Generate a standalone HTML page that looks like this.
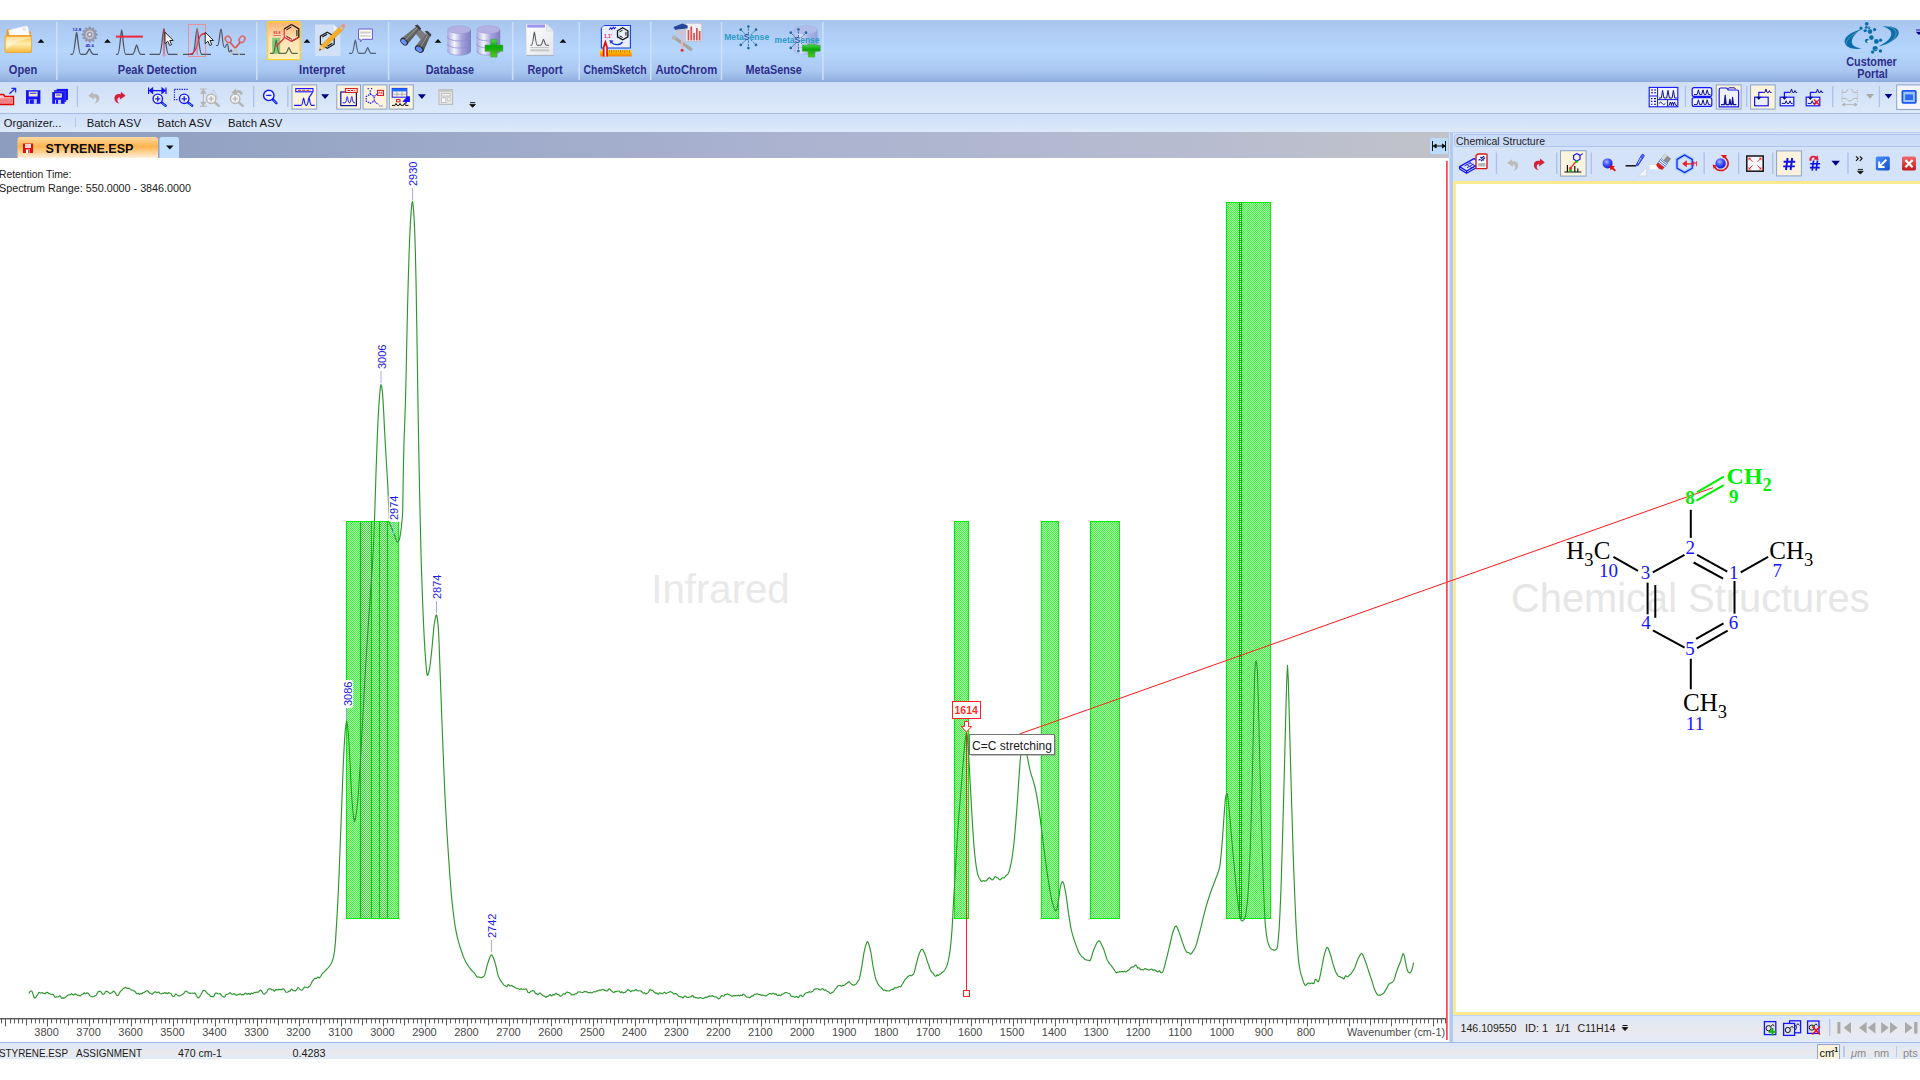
<!DOCTYPE html>
<html lang="en"><head><meta charset="utf-8"><title>STYRENE.ESP - Spectrum Processor</title>
<style>
html,body{margin:0;padding:0;background:#fff;width:1920px;height:1080px;overflow:hidden}
svg{display:block;position:absolute;left:0;top:0}
text{font-family:"Liberation Sans",sans-serif;font-size:11px;fill:#222}
.rb{font-weight:bold;font-size:12.5px;fill:#2d2d8c}
.ax{font-size:11px;fill:#4a4a4a}
.pk{font-size:11px;fill:#1a1ae6}
.ser{font-family:"Liberation Serif",serif}
</style></head><body>
<svg width="1920" height="1080" viewBox="0 0 1920 1080">
<defs>
<linearGradient id="gRib" x1="0" y1="0" x2="0" y2="1">
<stop offset="0" stop-color="#a9c5ee"/><stop offset="0.5" stop-color="#b6d6fe"/><stop offset="0.82" stop-color="#a9c7f0"/><stop offset="0.97" stop-color="#93b2e2"/><stop offset="1" stop-color="#8aa8da"/>
</linearGradient>
<linearGradient id="gTb" x1="0" y1="0" x2="0" y2="1">
<stop offset="0" stop-color="#cfdff8"/><stop offset="1" stop-color="#dce9f9"/>
</linearGradient>
<linearGradient id="gTab" x1="0" y1="0" x2="1" y2="0">
<stop offset="0" stop-color="#8c9dbf"/><stop offset="0.5" stop-color="#a8b1cf"/><stop offset="0.8" stop-color="#b6bbd0"/><stop offset="1" stop-color="#c1c2ca"/>
</linearGradient>
<linearGradient id="gTabSel" x1="0" y1="0" x2="0" y2="1">
<stop offset="0" stop-color="#ffd9a3"/><stop offset="0.45" stop-color="#ffb44e"/><stop offset="1" stop-color="#fff0dc"/>
</linearGradient>
<linearGradient id="gSt" x1="0" y1="0" x2="0" y2="1">
<stop offset="0" stop-color="#dce7f9"/><stop offset="0.55" stop-color="#e9e9ec"/><stop offset="1" stop-color="#e2ebf8"/>
</linearGradient>
<linearGradient id="gHi" x1="0" y1="0" x2="0" y2="1">
<stop offset="0" stop-color="#fbb06f"/><stop offset="0.45" stop-color="#ffe2b4"/><stop offset="1" stop-color="#fff1ba"/>
</linearGradient>
<pattern id="chk" width="2" height="2" patternUnits="userSpaceOnUse">
<rect width="2" height="2" fill="#c0ffc0"/><rect x="0" y="0" width="1" height="1" fill="#2cff2c"/><rect x="1" y="1" width="1" height="1" fill="#2cff2c"/>
</pattern>
<pattern id="chkD" width="2" height="2" patternUnits="userSpaceOnUse">
<rect width="2" height="2" fill="#c4f2c4"/><rect x="0" y="0" width="1" height="1" fill="#3cd23c"/><rect x="1" y="1" width="1" height="1" fill="#3cd23c"/>
</pattern>
</defs>

<rect x="0" y="0" width="1920" height="1080" fill="#fff"/>
<rect x="0" y="20" width="1920" height="62" fill="url(#gRib)"/>
<rect x="0" y="82" width="1920" height="31" fill="url(#gTb)"/>
<rect x="0" y="113" width="1920" height="1" fill="#a9b9e5"/>
<rect x="0" y="114" width="1920" height="18" fill="url(#gTb)"/>
<rect x="0" y="132" width="1449" height="26" fill="url(#gTab)"/>
<rect x="1449" y="132" width="471" height="910" fill="#d5e3f8"/>
<rect x="1449" y="132" width="471" height="1" fill="#b9cdf0"/>
<rect x="1450" y="133" width="3" height="909" fill="#b3c9f0"/>
<rect x="1449" y="133" width="1" height="909" fill="#cfdff7"/>
<rect x="1454.5" y="134.5" width="480" height="12" rx="2.5" fill="#cbdcf8" stroke="#aec5ee"/>
<text x="1456" y="145" style="font-size:11px;fill:#1c1c1c" textLength="89" lengthAdjust="spacingAndGlyphs">Chemical Structure</text>
<rect x="1453" y="181" width="470" height="834" fill="#ffe98f"/>
<rect x="1456" y="184" width="470" height="828" fill="#fff"/>
<rect x="1453" y="1015" width="467" height="27" fill="url(#gSt)"/>
<rect x="1453" y="1015" width="467" height="1" fill="#c3d3f2"/>
<rect x="0" y="1042" width="1920" height="1" fill="#a4b8e8"/>
<rect x="0" y="1043" width="1920" height="16" fill="url(#gSt)"/>
<text x="651.3" y="602.9" style="font-size:40.5px;fill:#e9e9e9" textLength="138.4" lengthAdjust="spacingAndGlyphs">Infrared</text>
<rect x="346" y="521" width="53" height="398" fill="url(#chk)"/>
<rect x="360" y="521" width="12" height="398" fill="url(#chkD)"/>
<rect x="379" y="521" width="9" height="398" fill="url(#chkD)"/>
<rect x="346" y="521" width="1" height="398" fill="#00f000"/>
<rect x="398" y="521" width="1" height="398" fill="#00f000"/>
<rect x="346" y="918" width="53" height="1" fill="#00f000"/>
<rect x="346" y="521" width="53" height="1" fill="#00f000"/>
<rect x="360" y="521" width="1" height="398" fill="#00c800"/>
<rect x="371" y="521" width="1" height="398" fill="#00c800"/>
<rect x="379" y="521" width="1" height="398" fill="#00c800"/>
<rect x="387" y="521" width="1" height="398" fill="#00c800"/>
<rect x="954" y="521" width="15" height="398" fill="url(#chk)"/>
<rect x="954" y="521" width="1" height="398" fill="#00f000"/>
<rect x="968" y="521" width="1" height="398" fill="#00f000"/>
<rect x="954" y="918" width="15" height="1" fill="#00f000"/>
<rect x="954" y="521" width="15" height="1" fill="#00f000"/>
<rect x="1041" y="521" width="18" height="398" fill="url(#chk)"/>
<rect x="1041" y="521" width="1" height="398" fill="#00f000"/>
<rect x="1058" y="521" width="1" height="398" fill="#00f000"/>
<rect x="1041" y="918" width="18" height="1" fill="#00f000"/>
<rect x="1041" y="521" width="18" height="1" fill="#00f000"/>
<rect x="1090" y="521" width="30" height="398" fill="url(#chk)"/>
<rect x="1090" y="521" width="1" height="398" fill="#00f000"/>
<rect x="1119" y="521" width="1" height="398" fill="#00f000"/>
<rect x="1090" y="918" width="30" height="1" fill="#00f000"/>
<rect x="1090" y="521" width="30" height="1" fill="#00f000"/>
<rect x="1226" y="202" width="45" height="717" fill="url(#chk)"/>
<rect x="1226" y="202" width="1" height="717" fill="#00f000"/>
<rect x="1270" y="202" width="1" height="717" fill="#00f000"/>
<rect x="1226" y="918" width="45" height="1" fill="#00f000"/>
<rect x="1226" y="202" width="45" height="1" fill="#00f000"/>
<rect x="1239" y="202" width="1" height="717" fill="#00b400"/>
<rect x="1241" y="202" width="1" height="717" fill="#00b400"/>
<rect x="1240" y="202" width="1" height="717" fill="#18c018"/>
<path d="M1240.5,203 V918" stroke="#f0fff0" stroke-width="1" stroke-dasharray="1 1"/>
<path d="M28.9,993.6 L29.6,992.0 L30.3,991.3 L31.0,991.0 L31.7,991.0 L32.4,992.3 L33.1,994.4 L33.8,996.5 L34.5,997.9 L35.2,997.9 L35.9,997.1 L36.6,996.2 L37.3,995.2 L38.0,994.0 L38.7,992.8 L39.4,992.4 L40.1,992.8 L40.8,993.1 L41.5,992.7 L42.2,992.6 L42.9,993.3 L43.6,993.3 L44.3,993.3 L45.0,993.9 L45.7,993.3 L46.4,992.5 L47.1,992.3 L47.8,992.6 L48.5,993.4 L49.2,993.6 L49.9,993.8 L50.6,994.2 L51.3,994.2 L52.0,994.4 L52.7,994.4 L53.4,994.7 L54.1,995.6 L54.8,996.9 L55.5,997.3 L56.2,996.9 L56.9,996.9 L57.6,997.0 L58.3,996.9 L59.0,996.4 L59.7,995.8 L60.4,996.1 L61.1,997.6 L61.8,998.5 L62.5,997.9 L63.2,997.7 L63.9,998.3 L64.6,998.0 L65.3,997.4 L66.0,997.0 L66.7,996.4 L67.4,995.5 L68.1,994.9 L68.8,994.9 L69.5,994.9 L70.2,994.8 L70.9,994.1 L71.6,993.5 L72.3,994.4 L73.0,995.2 L73.7,994.7 L74.4,994.1 L75.1,993.9 L75.8,994.2 L76.5,994.5 L77.2,994.9 L77.9,995.5 L78.6,995.4 L79.3,995.4 L80.0,996.0 L80.7,995.7 L81.4,994.8 L82.1,994.5 L82.8,994.3 L83.5,993.4 L84.2,992.8 L84.9,993.4 L85.6,993.8 L86.3,993.3 L87.0,992.8 L87.7,993.0 L88.4,993.5 L89.1,994.3 L89.8,995.5 L90.5,996.2 L91.2,996.5 L91.9,996.7 L92.6,996.9 L93.3,996.8 L94.0,996.5 L94.7,995.9 L95.4,995.7 L96.1,995.4 L96.8,994.3 L97.5,992.8 L98.2,991.8 L98.9,991.3 L99.6,991.3 L100.3,991.5 L101.0,991.9 L101.7,992.9 L102.4,993.9 L103.1,994.3 L103.8,994.2 L104.5,993.5 L105.2,992.2 L105.9,991.3 L106.6,991.2 L107.3,991.6 L108.0,992.0 L108.7,992.4 L109.4,993.2 L110.1,993.6 L110.8,993.1 L111.5,992.8 L112.2,992.6 L112.9,991.7 L113.6,991.1 L114.3,991.5 L115.0,992.4 L115.7,993.5 L116.4,994.8 L117.1,995.5 L117.8,995.5 L118.5,994.8 L119.2,993.6 L119.9,992.2 L120.6,991.2 L121.3,990.6 L122.0,990.1 L122.7,989.1 L123.4,988.4 L124.1,988.2 L124.8,987.6 L125.5,987.3 L126.2,987.8 L126.9,988.2 L127.6,988.4 L128.3,988.4 L129.0,988.3 L129.7,988.7 L130.4,989.4 L131.1,989.9 L131.8,990.2 L132.5,990.3 L133.2,990.5 L133.9,990.9 L134.6,991.1 L135.3,991.9 L136.0,993.0 L136.7,993.7 L137.4,993.7 L138.1,993.1 L138.8,993.7 L139.5,994.5 L140.2,994.1 L140.9,993.5 L141.6,993.8 L142.3,993.6 L143.0,992.6 L143.7,992.5 L144.4,992.4 L145.1,991.7 L145.8,991.3 L146.5,990.8 L147.2,990.7 L147.9,991.2 L148.6,992.0 L149.3,992.8 L150.0,993.3 L150.7,993.4 L151.4,993.9 L152.1,994.4 L152.8,993.8 L153.5,992.8 L154.2,992.3 L154.9,991.9 L155.6,991.8 L156.3,992.3 L157.0,992.7 L157.7,992.5 L158.4,991.9 L159.1,992.5 L159.8,993.5 L160.5,993.8 L161.2,994.0 L161.9,993.7 L162.6,993.4 L163.3,993.5 L164.0,992.8 L164.7,992.6 L165.4,993.3 L166.1,992.9 L166.8,993.2 L167.5,993.7 L168.2,993.0 L168.9,992.6 L169.6,993.1 L170.3,993.2 L171.0,993.5 L171.7,994.8 L172.4,995.8 L173.1,996.4 L173.8,996.5 L174.5,995.9 L175.2,994.6 L175.9,993.9 L176.6,994.4 L177.3,995.1 L178.0,995.6 L178.7,995.9 L179.4,995.9 L180.1,995.7 L180.8,995.5 L181.5,995.1 L182.2,994.6 L182.9,994.2 L183.6,993.6 L184.3,992.6 L185.0,991.6 L185.7,991.1 L186.4,991.2 L187.1,991.7 L187.8,992.1 L188.5,992.9 L189.2,993.4 L189.9,993.1 L190.6,993.0 L191.3,993.2 L192.0,993.2 L192.7,993.1 L193.4,993.3 L194.1,993.1 L194.8,992.8 L195.5,993.6 L196.2,995.2 L196.9,996.5 L197.6,997.5 L198.3,997.9 L199.0,997.5 L199.7,996.6 L200.4,995.4 L201.1,994.3 L201.8,993.0 L202.5,991.7 L203.2,990.7 L203.9,990.3 L204.6,990.5 L205.3,991.0 L206.0,991.8 L206.7,992.7 L207.4,993.6 L208.1,994.0 L208.8,994.3 L209.5,995.0 L210.2,996.0 L210.9,996.7 L211.6,996.5 L212.3,996.3 L213.0,996.8 L213.7,996.6 L214.4,995.0 L215.1,993.4 L215.8,993.0 L216.5,993.1 L217.2,993.3 L217.9,993.7 L218.6,994.0 L219.3,993.8 L220.0,993.5 L220.7,994.3 L221.4,995.3 L222.1,996.0 L222.8,996.5 L223.5,997.0 L224.2,997.2 L224.9,996.6 L225.6,995.2 L226.3,994.5 L227.0,994.5 L227.7,994.3 L228.4,993.8 L229.1,993.4 L229.8,992.8 L230.5,992.9 L231.2,993.8 L231.9,994.1 L232.6,994.1 L233.3,994.2 L234.0,993.7 L234.7,993.9 L235.4,994.9 L236.1,995.3 L236.8,995.1 L237.5,995.0 L238.2,994.6 L238.9,994.5 L239.6,994.1 L240.3,993.8 L241.0,994.4 L241.7,994.9 L242.4,994.5 L243.1,994.6 L243.8,994.6 L244.5,993.7 L245.2,993.1 L245.9,993.2 L246.6,993.7 L247.3,994.4 L248.0,994.1 L248.7,993.3 L249.4,993.9 L250.1,994.6 L250.8,993.7 L251.5,993.0 L252.2,993.4 L252.9,993.6 L253.6,993.2 L254.3,992.4 L255.0,992.3 L255.7,992.7 L256.4,992.3 L257.1,991.9 L257.8,992.3 L258.5,992.2 L259.2,991.0 L259.9,990.2 L260.6,990.1 L261.3,990.6 L262.0,991.6 L262.7,993.0 L263.4,993.9 L264.1,994.3 L264.8,993.9 L265.5,993.2 L266.2,992.7 L266.9,991.8 L267.6,990.3 L268.3,989.2 L269.0,988.9 L269.7,988.7 L270.4,988.8 L271.1,989.3 L271.8,989.8 L272.5,989.7 L273.2,989.8 L273.9,990.9 L274.6,991.2 L275.3,990.0 L276.0,989.3 L276.7,990.0 L277.4,990.0 L278.1,989.4 L278.8,989.6 L279.5,989.6 L280.2,989.4 L280.9,989.7 L281.6,989.6 L282.3,989.1 L283.0,988.9 L283.7,989.0 L284.4,989.7 L285.1,991.0 L285.8,992.1 L286.5,992.3 L287.2,992.2 L287.9,992.0 L288.6,991.4 L289.3,991.1 L290.0,991.1 L290.7,990.1 L291.4,989.1 L292.1,989.3 L292.8,990.3 L293.5,990.6 L294.2,990.7 L294.9,990.9 L295.6,990.6 L296.3,990.1 L297.0,989.0 L297.7,987.7 L298.4,987.7 L299.1,988.4 L299.8,989.1 L300.5,989.7 L301.2,990.1 L301.9,990.2 L302.6,989.8 L303.3,988.7 L304.0,987.6 L304.7,987.0 L305.4,987.3 L306.1,987.4 L306.8,987.5 L307.5,987.8 L308.2,987.4 L308.9,986.8 L309.6,986.4 L310.3,985.3 L311.0,984.0 L311.7,982.4 L312.4,981.2 L313.1,980.3 L313.8,979.4 L314.5,978.5 L315.2,978.2 L315.9,978.5 L316.6,978.5 L317.3,977.4 L318.0,977.0 L318.7,977.6 L319.4,977.9 L320.1,977.2 L320.8,976.3 L321.5,975.1 L322.2,973.8 L322.9,973.0 L323.6,972.4 L324.3,971.9 L325.0,971.1 L325.7,970.3 L326.4,969.7 L327.1,968.9 L327.8,968.2 L328.5,967.4 L329.2,966.5 L329.9,965.6 L330.6,964.5 L331.3,963.2 L332.0,961.7 L332.7,959.8 L333.4,957.2 L334.1,953.5 L334.8,948.8 L335.5,941.1 L336.2,929.9 L336.9,918.5 L337.6,906.1 L338.3,892.1 L339.0,876.0 L339.7,858.3 L340.4,840.0 L341.1,822.0 L341.8,803.4 L342.5,784.2 L343.2,766.4 L343.9,751.7 L344.6,739.0 L345.3,730.0 L346.0,724.2 L346.7,721.5 L347.4,724.7 L348.1,730.9 L348.8,740.0 L349.5,751.5 L350.2,766.0 L350.9,781.4 L351.6,794.1 L352.3,804.2 L353.0,812.0 L353.7,818.3 L354.4,821.5 L355.1,819.8 L355.8,816.1 L356.5,811.8 L357.2,806.0 L357.9,798.9 L358.6,790.0 L359.3,779.2 L360.0,767.2 L360.7,754.7 L361.4,742.4 L362.1,730.2 L362.8,717.5 L363.5,704.5 L364.2,691.6 L364.9,679.1 L365.6,667.3 L366.3,656.0 L367.0,645.0 L367.7,634.1 L368.4,623.5 L369.1,613.1 L369.8,603.1 L370.5,593.0 L371.2,582.8 L371.9,572.9 L372.6,562.4 L373.3,550.0 L374.0,533.8 L374.7,514.5 L375.4,491.9 L376.1,469.9 L376.8,450.0 L377.5,432.1 L378.2,417.5 L378.9,405.0 L379.6,395.2 L380.3,387.9 L381.0,384.7 L381.7,386.6 L382.4,391.6 L383.1,401.4 L383.8,414.4 L384.5,428.9 L385.2,442.1 L385.9,453.8 L386.6,465.0 L387.3,476.7 L388.0,489.8 L388.7,508.4 L389.4,521.3 L390.1,524.3 L390.8,526.1 L391.5,527.5 L392.2,529.3 L392.9,531.2 L393.6,532.9 L394.3,534.7 L395.0,536.4 L395.7,538.6 L396.4,540.7 L397.1,542.0 L397.8,542.1 L398.5,541.2 L399.2,539.8 L399.9,537.2 L400.6,532.9 L401.3,527.8 L402.0,521.0 L402.7,512.4 L403.4,467.2 L404.1,438.8 L404.8,420.6 L405.5,400.6 L406.2,370.5 L406.9,336.1 L407.6,305.6 L408.3,279.3 L409.0,256.0 L409.7,237.6 L410.4,222.4 L411.1,212.1 L411.8,204.2 L412.5,201.4 L413.2,206.0 L413.9,214.6 L414.6,228.3 L415.3,249.3 L416.0,279.3 L416.7,321.5 L417.4,364.9 L418.1,410.7 L418.8,451.3 L419.5,487.3 L420.2,519.8 L420.9,549.1 L421.6,573.2 L422.3,593.6 L423.0,611.1 L423.7,627.2 L424.4,641.4 L425.1,652.4 L425.8,662.3 L426.5,670.7 L427.2,675.3 L427.9,675.1 L428.6,672.9 L429.3,670.0 L430.0,665.8 L430.7,660.0 L431.4,653.9 L432.1,646.7 L432.8,638.6 L433.5,630.9 L434.2,624.7 L434.9,620.4 L435.6,616.6 L436.3,614.7 L437.0,616.3 L437.7,621.4 L438.4,628.6 L439.1,643.3 L439.8,663.5 L440.5,682.4 L441.2,701.4 L441.9,720.4 L442.6,738.5 L443.3,756.1 L444.0,773.3 L444.7,789.5 L445.4,804.0 L446.1,817.0 L446.8,829.2 L447.5,840.6 L448.2,851.3 L448.9,861.6 L449.6,871.6 L450.3,881.2 L451.0,890.1 L451.7,898.0 L452.4,904.8 L453.1,911.1 L453.8,916.8 L454.5,922.0 L455.2,926.6 L455.9,930.4 L456.6,933.9 L457.3,937.0 L458.0,939.8 L458.7,942.4 L459.4,944.8 L460.1,947.0 L460.8,949.2 L461.5,951.3 L462.2,953.3 L462.9,955.3 L463.6,957.1 L464.3,958.8 L465.0,960.3 L465.7,961.8 L466.4,963.0 L467.1,964.2 L467.8,965.2 L468.5,966.3 L469.2,967.3 L469.9,968.2 L470.6,969.1 L471.3,970.0 L472.0,970.8 L472.7,971.5 L473.4,972.1 L474.1,972.9 L474.8,973.7 L475.5,974.8 L476.2,976.0 L476.9,976.8 L477.6,977.1 L478.3,977.0 L479.0,976.9 L479.7,977.3 L480.4,977.7 L481.1,977.7 L481.8,977.4 L482.5,977.1 L483.2,976.7 L483.9,976.3 L484.6,975.2 L485.3,973.1 L486.0,970.3 L486.7,967.2 L487.4,964.4 L488.1,962.2 L488.8,960.2 L489.5,958.2 L490.2,956.5 L490.9,955.3 L491.6,954.9 L492.3,955.5 L493.0,956.9 L493.7,958.7 L494.4,960.8 L495.1,962.8 L495.8,965.4 L496.5,968.5 L497.2,971.8 L497.9,974.7 L498.6,976.7 L499.3,978.1 L500.0,979.4 L500.7,980.6 L501.4,981.7 L502.1,982.7 L502.8,983.6 L503.5,984.6 L504.2,985.3 L504.9,985.5 L505.6,985.9 L506.3,986.6 L507.0,986.6 L507.7,985.3 L508.4,984.5 L509.1,985.1 L509.8,986.0 L510.5,986.0 L511.2,985.5 L511.9,985.5 L512.6,986.2 L513.3,986.7 L514.0,986.9 L514.7,987.2 L515.4,987.7 L516.1,988.1 L516.8,988.2 L517.5,988.7 L518.2,988.8 L518.9,988.9 L519.6,989.4 L520.3,989.2 L521.0,988.6 L521.7,989.0 L522.4,989.2 L523.1,989.1 L523.8,989.3 L524.5,989.3 L525.2,989.1 L525.9,988.8 L526.6,989.4 L527.3,991.1 L528.0,992.4 L528.7,992.8 L529.4,992.9 L530.1,992.2 L530.8,991.2 L531.5,991.1 L532.2,991.0 L532.9,990.6 L533.6,990.7 L534.3,991.4 L535.0,992.7 L535.7,993.6 L536.4,993.5 L537.1,993.9 L537.8,994.6 L538.5,994.2 L539.2,993.4 L539.9,993.0 L540.6,993.3 L541.3,994.2 L542.0,994.8 L542.7,995.6 L543.4,996.0 L544.1,995.9 L544.8,996.3 L545.5,997.1 L546.2,997.3 L546.9,996.8 L547.6,996.3 L548.3,996.3 L549.0,995.4 L549.7,994.5 L550.4,994.8 L551.1,995.7 L551.8,995.9 L552.5,994.8 L553.2,994.4 L553.9,995.1 L554.6,994.8 L555.3,993.8 L556.0,993.3 L556.7,993.7 L557.4,994.4 L558.1,994.5 L558.8,994.6 L559.5,995.6 L560.2,996.3 L560.9,996.1 L561.6,995.6 L562.3,995.0 L563.0,994.1 L563.7,993.6 L564.4,993.9 L565.1,994.1 L565.8,993.2 L566.5,992.2 L567.2,992.0 L567.9,992.4 L568.6,992.5 L569.3,992.8 L570.0,993.1 L570.7,993.6 L571.4,994.6 L572.1,994.9 L572.8,994.7 L573.5,994.8 L574.2,994.8 L574.9,994.1 L575.6,993.7 L576.3,993.8 L577.0,993.2 L577.7,992.2 L578.4,991.9 L579.1,992.0 L579.8,991.9 L580.5,992.0 L581.2,992.3 L581.9,992.5 L582.6,992.5 L583.3,992.2 L584.0,991.7 L584.7,991.4 L585.4,991.6 L586.1,991.9 L586.8,991.8 L587.5,992.1 L588.2,992.7 L588.9,992.9 L589.6,992.5 L590.3,992.3 L591.0,992.8 L591.7,993.0 L592.4,992.6 L593.1,992.1 L593.8,991.7 L594.5,991.8 L595.2,991.8 L595.9,991.5 L596.6,991.1 L597.3,990.9 L598.0,990.9 L598.7,990.4 L599.4,990.0 L600.1,990.1 L600.8,990.2 L601.5,989.9 L602.2,989.5 L602.9,989.4 L603.6,989.8 L604.3,990.3 L605.0,990.3 L605.7,990.6 L606.4,991.0 L607.1,991.0 L607.8,990.3 L608.5,989.3 L609.2,988.8 L609.9,989.2 L610.6,990.0 L611.3,990.7 L612.0,991.3 L612.7,991.9 L613.4,992.5 L614.1,992.6 L614.8,991.7 L615.5,991.4 L616.2,991.6 L616.9,991.3 L617.6,991.0 L618.3,991.0 L619.0,991.0 L619.7,991.5 L620.4,992.6 L621.1,992.5 L621.8,991.7 L622.5,992.4 L623.2,993.0 L623.9,992.4 L624.6,992.5 L625.3,992.4 L626.0,991.5 L626.7,990.9 L627.4,990.1 L628.1,989.5 L628.8,990.0 L629.5,990.5 L630.2,991.2 L630.9,991.7 L631.6,991.1 L632.3,990.5 L633.0,990.7 L633.7,991.0 L634.4,990.8 L635.1,990.0 L635.8,989.5 L636.5,989.8 L637.2,990.8 L637.9,991.0 L638.6,990.7 L639.3,990.7 L640.0,990.7 L640.7,990.9 L641.4,991.3 L642.1,992.1 L642.8,993.0 L643.5,993.1 L644.2,992.8 L644.9,993.3 L645.6,993.9 L646.3,993.8 L647.0,993.3 L647.7,993.0 L648.4,992.3 L649.1,990.9 L649.8,989.9 L650.5,989.7 L651.2,990.1 L651.9,990.4 L652.6,990.4 L653.3,991.1 L654.0,992.0 L654.7,992.5 L655.4,993.0 L656.1,993.5 L656.8,993.0 L657.5,993.3 L658.2,994.3 L658.9,993.7 L659.6,992.9 L660.3,992.9 L661.0,993.2 L661.7,993.7 L662.4,993.7 L663.1,993.3 L663.8,992.6 L664.5,992.1 L665.2,992.8 L665.9,993.6 L666.6,993.3 L667.3,992.8 L668.0,992.6 L668.7,992.3 L669.4,991.9 L670.1,991.6 L670.8,991.8 L671.5,992.2 L672.2,992.4 L672.9,993.2 L673.6,994.0 L674.3,994.0 L675.0,993.5 L675.7,993.6 L676.4,993.9 L677.1,994.5 L677.8,995.3 L678.5,996.0 L679.2,996.4 L679.9,996.7 L680.6,996.9 L681.3,996.8 L682.0,997.0 L682.7,997.8 L683.4,997.6 L684.1,996.5 L684.8,996.1 L685.5,996.3 L686.2,996.8 L686.9,997.4 L687.6,997.5 L688.3,997.3 L689.0,997.3 L689.7,997.1 L690.4,996.9 L691.1,996.5 L691.8,995.8 L692.5,995.3 L693.2,996.2 L693.9,997.3 L694.6,997.1 L695.3,997.3 L696.0,997.9 L696.7,997.8 L697.4,997.7 L698.1,998.3 L698.8,998.4 L699.5,997.9 L700.2,997.6 L700.9,997.7 L701.6,998.0 L702.3,998.2 L703.0,998.4 L703.7,998.2 L704.4,997.9 L705.1,997.5 L705.8,997.1 L706.5,997.4 L707.2,997.4 L707.9,996.7 L708.6,996.3 L709.3,996.1 L710.0,995.9 L710.7,996.2 L711.4,996.1 L712.1,995.6 L712.8,995.9 L713.5,996.5 L714.2,996.8 L714.9,996.9 L715.6,996.8 L716.3,997.0 L717.0,997.5 L717.7,998.2 L718.4,998.9 L719.1,998.7 L719.8,998.3 L720.5,997.3 L721.2,996.0 L721.9,995.6 L722.6,995.8 L723.3,996.2 L724.0,996.0 L724.7,994.9 L725.4,994.6 L726.1,994.6 L726.8,994.2 L727.5,993.9 L728.2,994.3 L728.9,994.7 L729.6,994.9 L730.3,995.3 L731.0,995.7 L731.7,996.2 L732.4,996.4 L733.1,995.7 L733.8,995.6 L734.5,995.9 L735.2,995.6 L735.9,995.5 L736.6,995.8 L737.3,995.7 L738.0,995.2 L738.7,995.3 L739.4,996.0 L740.1,995.7 L740.8,995.0 L741.5,995.5 L742.2,995.5 L742.9,994.3 L743.6,994.1 L744.3,994.8 L745.0,995.3 L745.7,996.1 L746.4,996.9 L747.1,997.0 L747.8,997.1 L748.5,997.3 L749.2,997.5 L749.9,997.7 L750.6,997.2 L751.3,996.2 L752.0,995.9 L752.7,996.2 L753.4,995.7 L754.1,994.7 L754.8,994.2 L755.5,994.3 L756.2,994.2 L756.9,993.9 L757.6,993.9 L758.3,994.4 L759.0,994.7 L759.7,994.5 L760.4,994.8 L761.1,995.3 L761.8,995.1 L762.5,995.0 L763.2,995.2 L763.9,995.4 L764.6,995.7 L765.3,995.7 L766.0,995.9 L766.7,995.7 L767.4,994.8 L768.1,994.5 L768.8,994.1 L769.5,993.6 L770.2,993.6 L770.9,993.8 L771.6,994.1 L772.3,993.9 L773.0,993.2 L773.7,993.2 L774.4,994.1 L775.1,994.0 L775.8,993.7 L776.5,994.5 L777.2,995.4 L777.9,995.6 L778.6,995.2 L779.3,994.9 L780.0,995.4 L780.7,995.7 L781.4,994.8 L782.1,994.0 L782.8,994.1 L783.5,993.7 L784.2,993.2 L784.9,992.9 L785.6,992.5 L786.3,992.5 L787.0,992.8 L787.7,993.0 L788.4,993.3 L789.1,993.5 L789.8,993.8 L790.5,995.0 L791.2,996.2 L791.9,996.4 L792.6,996.3 L793.3,996.5 L794.0,996.9 L794.7,997.3 L795.4,997.2 L796.1,996.4 L796.8,996.5 L797.5,997.3 L798.2,997.8 L798.9,996.9 L799.6,995.7 L800.3,995.1 L801.0,995.2 L801.7,996.2 L802.4,996.6 L803.1,996.0 L803.8,995.3 L804.5,994.3 L805.2,993.3 L805.9,993.0 L806.6,992.8 L807.3,992.6 L808.0,992.5 L808.7,992.0 L809.4,991.7 L810.1,992.1 L810.8,992.2 L811.5,991.8 L812.2,991.7 L812.9,991.1 L813.6,990.0 L814.3,989.5 L815.0,989.1 L815.7,988.8 L816.4,988.9 L817.1,988.7 L817.8,988.8 L818.5,989.2 L819.2,989.4 L819.9,989.8 L820.6,990.0 L821.3,989.4 L822.0,988.8 L822.7,988.7 L823.4,989.3 L824.1,990.2 L824.8,990.1 L825.5,989.8 L826.2,990.3 L826.9,991.1 L827.6,991.6 L828.3,991.8 L829.0,992.1 L829.7,993.0 L830.4,993.4 L831.1,993.1 L831.8,992.7 L832.5,992.4 L833.2,992.0 L833.9,991.1 L834.6,990.0 L835.3,989.0 L836.0,988.4 L836.7,987.6 L837.4,986.4 L838.1,985.7 L838.8,985.6 L839.5,985.5 L840.2,985.5 L840.9,986.1 L841.6,986.2 L842.3,985.7 L843.0,985.4 L843.7,985.4 L844.4,985.2 L845.1,984.6 L845.8,984.0 L846.5,983.4 L847.2,983.0 L847.9,982.6 L848.6,981.7 L849.3,981.8 L850.0,982.7 L850.7,983.4 L851.4,984.0 L852.1,984.6 L852.8,984.9 L853.5,985.3 L854.2,985.1 L854.9,984.4 L855.6,984.3 L856.3,983.9 L857.0,982.5 L857.7,981.6 L858.4,980.7 L859.1,979.5 L859.8,977.1 L860.5,973.7 L861.2,969.7 L861.9,965.9 L862.6,961.6 L863.3,956.9 L864.0,952.6 L864.7,949.4 L865.4,946.7 L866.1,944.2 L866.8,942.4 L867.5,941.7 L868.2,942.5 L868.9,944.4 L869.6,947.0 L870.3,949.8 L871.0,953.2 L871.7,957.6 L872.4,962.3 L873.1,966.5 L873.8,970.1 L874.5,973.7 L875.2,976.9 L875.9,979.4 L876.6,981.1 L877.3,982.6 L878.0,983.9 L878.7,985.1 L879.4,986.0 L880.1,986.6 L880.8,987.1 L881.5,987.7 L882.2,988.7 L882.9,989.7 L883.6,990.3 L884.3,990.1 L885.0,990.1 L885.7,990.6 L886.4,990.9 L887.1,990.9 L887.8,991.0 L888.5,991.0 L889.2,990.9 L889.9,990.5 L890.6,990.0 L891.3,989.8 L892.0,989.4 L892.7,989.3 L893.4,989.4 L894.1,988.4 L894.8,987.6 L895.5,987.9 L896.2,988.1 L896.9,987.7 L897.6,987.3 L898.3,987.0 L899.0,986.6 L899.7,986.6 L900.4,986.8 L901.1,986.2 L901.8,985.0 L902.5,984.0 L903.2,982.9 L903.9,981.5 L904.6,980.2 L905.3,979.3 L906.0,978.6 L906.7,977.8 L907.4,976.8 L908.1,976.5 L908.8,976.0 L909.5,975.4 L910.2,975.4 L910.9,975.8 L911.6,975.7 L912.3,975.0 L913.0,974.5 L913.7,973.8 L914.4,971.9 L915.1,969.1 L915.8,966.0 L916.5,963.4 L917.2,960.7 L917.9,957.9 L918.6,955.5 L919.3,953.6 L920.0,952.0 L920.7,950.5 L921.4,949.5 L922.1,949.2 L922.8,949.8 L923.5,951.0 L924.2,952.5 L924.9,954.1 L925.6,955.9 L926.3,958.1 L927.0,960.3 L927.7,962.4 L928.4,964.3 L929.1,966.3 L929.8,968.2 L930.5,969.9 L931.2,971.4 L931.9,972.3 L932.6,972.9 L933.3,973.6 L934.0,974.7 L934.7,975.6 L935.4,976.2 L936.1,976.2 L936.8,975.1 L937.5,974.9 L938.2,975.6 L938.9,974.9 L939.6,974.1 L940.3,974.1 L941.0,973.6 L941.7,972.8 L942.4,972.3 L943.1,971.8 L943.8,971.2 L944.5,970.3 L945.2,969.2 L945.9,968.0 L946.6,966.6 L947.3,964.6 L948.0,961.9 L948.7,958.7 L949.4,954.9 L950.1,950.1 L950.8,944.0 L951.5,936.6 L952.2,926.7 L952.9,913.9 L953.6,901.0 L954.3,888.8 L955.0,876.7 L955.7,864.8 L956.4,853.0 L957.1,841.5 L957.8,830.7 L958.5,820.9 L959.2,811.8 L959.9,803.1 L960.6,794.4 L961.3,785.6 L962.0,776.8 L962.7,768.1 L963.4,759.7 L964.1,751.4 L964.8,743.3 L965.5,737.6 L966.2,733.6 L966.9,734.1 L967.6,739.0 L968.3,748.6 L969.0,760.8 L969.7,773.8 L970.4,787.3 L971.1,800.1 L971.8,812.8 L972.5,824.6 L973.2,835.0 L973.9,844.7 L974.6,853.2 L975.3,859.5 L976.0,864.9 L976.7,869.5 L977.4,873.1 L978.1,875.3 L978.8,877.0 L979.5,878.5 L980.2,879.6 L980.9,880.6 L981.6,881.4 L982.3,881.3 L983.0,880.6 L983.7,880.8 L984.4,881.2 L985.1,880.9 L985.8,880.8 L986.5,880.7 L987.2,879.7 L987.9,878.8 L988.6,878.2 L989.3,877.7 L990.0,878.0 L990.7,878.8 L991.4,879.4 L992.1,880.0 L992.8,879.8 L993.5,878.8 L994.2,877.8 L994.9,876.8 L995.6,876.6 L996.3,877.1 L997.0,877.8 L997.7,877.9 L998.4,878.2 L999.1,879.4 L999.8,879.9 L1000.5,879.7 L1001.2,879.0 L1001.9,878.2 L1002.6,877.8 L1003.3,877.8 L1004.0,877.8 L1004.7,877.1 L1005.4,876.3 L1006.1,875.5 L1006.8,875.0 L1007.5,874.5 L1008.2,873.5 L1008.9,872.0 L1009.6,869.7 L1010.3,866.8 L1011.0,863.7 L1011.7,860.0 L1012.4,855.5 L1013.1,850.3 L1013.8,844.5 L1014.5,837.8 L1015.2,829.8 L1015.9,820.9 L1016.6,811.7 L1017.3,802.2 L1018.0,792.0 L1018.7,781.8 L1019.4,771.4 L1020.1,761.5 L1020.8,755.1 L1021.5,750.8 L1022.2,748.6 L1022.9,747.4 L1023.6,747.0 L1024.3,747.7 L1025.0,749.0 L1025.7,750.7 L1026.4,753.1 L1027.1,755.8 L1027.8,759.2 L1028.5,762.9 L1029.2,766.6 L1029.9,769.7 L1030.6,772.4 L1031.3,774.8 L1032.0,777.0 L1032.7,779.2 L1033.4,781.4 L1034.1,783.8 L1034.8,786.5 L1035.5,789.5 L1036.2,792.9 L1036.9,796.7 L1037.6,800.9 L1038.3,805.4 L1039.0,810.0 L1039.7,814.8 L1040.4,819.9 L1041.1,825.4 L1041.8,831.2 L1042.5,837.2 L1043.2,843.0 L1043.9,848.5 L1044.6,853.9 L1045.3,859.2 L1046.0,864.4 L1046.7,869.5 L1047.4,874.4 L1048.1,879.0 L1048.8,883.4 L1049.5,887.7 L1050.2,892.0 L1050.9,896.0 L1051.6,899.5 L1052.3,902.5 L1053.0,904.7 L1053.7,906.8 L1054.4,908.7 L1055.1,910.1 L1055.8,910.9 L1056.5,910.5 L1057.2,907.8 L1057.9,903.8 L1058.6,899.8 L1059.3,894.4 L1060.0,888.8 L1060.7,885.2 L1061.4,883.4 L1062.1,882.1 L1062.8,881.7 L1063.5,882.9 L1064.2,885.5 L1064.9,888.9 L1065.6,892.4 L1066.3,896.6 L1067.0,901.9 L1067.7,907.4 L1068.4,912.5 L1069.1,917.1 L1069.8,921.6 L1070.5,925.7 L1071.2,929.3 L1071.9,932.2 L1072.6,934.8 L1073.3,937.2 L1074.0,939.4 L1074.7,941.5 L1075.4,943.4 L1076.1,945.4 L1076.8,947.3 L1077.5,949.1 L1078.2,950.8 L1078.9,952.4 L1079.6,953.6 L1080.3,954.5 L1081.0,955.5 L1081.7,956.5 L1082.4,957.0 L1083.1,957.4 L1083.8,958.2 L1084.5,959.1 L1085.2,959.5 L1085.9,959.7 L1086.6,959.9 L1087.3,960.2 L1088.0,960.2 L1088.7,960.3 L1089.4,960.9 L1090.1,960.6 L1090.8,959.3 L1091.5,957.1 L1092.2,954.7 L1092.9,952.2 L1093.6,950.2 L1094.3,948.6 L1095.0,946.9 L1095.7,945.3 L1096.4,943.7 L1097.1,942.4 L1097.8,941.5 L1098.5,940.9 L1099.2,940.8 L1099.9,941.4 L1100.6,942.5 L1101.3,943.9 L1102.0,945.4 L1102.7,947.0 L1103.4,948.5 L1104.1,950.4 L1104.8,952.6 L1105.5,954.9 L1106.2,957.2 L1106.9,959.2 L1107.6,960.7 L1108.3,961.8 L1109.0,962.9 L1109.7,963.9 L1110.4,964.7 L1111.1,965.4 L1111.8,966.3 L1112.5,967.3 L1113.2,968.4 L1113.9,969.4 L1114.6,970.5 L1115.3,971.5 L1116.0,972.6 L1116.7,972.8 L1117.4,972.2 L1118.1,972.3 L1118.8,972.0 L1119.5,971.4 L1120.2,971.8 L1120.9,972.0 L1121.6,971.5 L1122.3,971.4 L1123.0,971.9 L1123.7,971.6 L1124.4,971.3 L1125.1,971.8 L1125.8,971.8 L1126.5,971.6 L1127.2,971.0 L1127.9,970.4 L1128.6,970.4 L1129.3,969.7 L1130.0,968.7 L1130.7,967.9 L1131.4,967.2 L1132.1,967.1 L1132.8,967.1 L1133.5,966.8 L1134.2,966.2 L1134.9,965.4 L1135.6,965.0 L1136.3,965.5 L1137.0,966.8 L1137.7,968.1 L1138.4,967.9 L1139.1,967.8 L1139.8,968.7 L1140.5,969.6 L1141.2,969.8 L1141.9,969.5 L1142.6,969.8 L1143.3,970.0 L1144.0,969.5 L1144.7,968.6 L1145.4,968.6 L1146.1,969.1 L1146.8,969.0 L1147.5,969.4 L1148.2,969.9 L1148.9,969.8 L1149.6,969.8 L1150.3,969.7 L1151.0,969.4 L1151.7,969.0 L1152.4,969.5 L1153.1,970.3 L1153.8,970.0 L1154.5,969.8 L1155.2,970.1 L1155.9,970.5 L1156.6,971.3 L1157.3,971.8 L1158.0,972.0 L1158.7,971.2 L1159.4,970.7 L1160.1,971.6 L1160.8,972.8 L1161.5,972.9 L1162.2,972.4 L1162.9,971.6 L1163.6,969.7 L1164.3,967.1 L1165.0,964.3 L1165.7,961.7 L1166.4,959.1 L1167.1,956.3 L1167.8,953.3 L1168.5,950.4 L1169.2,947.4 L1169.9,944.5 L1170.6,941.5 L1171.3,938.3 L1172.0,935.3 L1172.7,932.7 L1173.4,930.7 L1174.1,928.8 L1174.8,927.2 L1175.5,926.2 L1176.2,926.1 L1176.9,926.9 L1177.6,928.4 L1178.3,930.3 L1179.0,932.1 L1179.7,933.9 L1180.4,935.9 L1181.1,938.1 L1181.8,940.3 L1182.5,942.4 L1183.2,944.2 L1183.9,946.2 L1184.6,948.1 L1185.3,949.8 L1186.0,951.2 L1186.7,952.1 L1187.4,952.5 L1188.1,952.5 L1188.8,952.5 L1189.5,953.4 L1190.2,954.2 L1190.9,954.1 L1191.6,953.4 L1192.3,952.4 L1193.0,951.3 L1193.7,950.3 L1194.4,949.0 L1195.1,947.7 L1195.8,946.0 L1196.5,943.9 L1197.2,941.5 L1197.9,938.9 L1198.6,936.2 L1199.3,933.5 L1200.0,930.8 L1200.7,928.1 L1201.4,925.3 L1202.1,922.4 L1202.8,919.4 L1203.5,916.5 L1204.2,913.6 L1204.9,911.0 L1205.6,908.4 L1206.3,906.0 L1207.0,903.6 L1207.7,901.3 L1208.4,899.0 L1209.1,896.8 L1209.8,894.7 L1210.5,892.6 L1211.2,890.7 L1211.9,888.8 L1212.6,887.0 L1213.3,885.2 L1214.0,883.3 L1214.7,881.5 L1215.4,879.5 L1216.1,877.7 L1216.8,876.0 L1217.5,874.2 L1218.2,872.3 L1218.9,870.0 L1219.6,867.1 L1220.3,862.8 L1221.0,856.2 L1221.7,848.1 L1222.4,839.6 L1223.1,829.6 L1223.8,819.4 L1224.5,809.7 L1225.2,800.7 L1225.9,796.1 L1226.6,793.6 L1227.3,793.7 L1228.0,798.3 L1228.7,805.1 L1229.4,811.8 L1230.1,819.7 L1230.8,828.2 L1231.5,836.4 L1232.2,844.3 L1232.9,852.0 L1233.6,859.7 L1234.3,867.2 L1235.0,874.6 L1235.7,881.9 L1236.4,888.9 L1237.1,895.3 L1237.8,901.6 L1238.5,907.3 L1239.2,911.9 L1239.9,915.4 L1240.6,918.5 L1241.3,920.5 L1242.0,920.9 L1242.7,920.6 L1243.4,920.2 L1244.1,919.5 L1244.8,918.4 L1245.5,915.6 L1246.2,911.4 L1246.9,906.4 L1247.6,899.3 L1248.3,889.6 L1249.0,878.0 L1249.7,863.0 L1250.4,844.4 L1251.1,822.7 L1251.8,796.8 L1252.5,768.8 L1253.2,737.5 L1253.9,706.4 L1254.6,676.7 L1255.3,663.4 L1256.0,660.9 L1256.7,663.4 L1257.4,670.2 L1258.1,693.5 L1258.8,719.5 L1259.5,748.3 L1260.2,777.0 L1260.9,803.4 L1261.6,828.6 L1262.3,851.9 L1263.0,873.9 L1263.7,892.5 L1264.4,909.0 L1265.1,921.9 L1265.8,929.4 L1266.5,935.1 L1267.2,939.3 L1267.9,942.2 L1268.6,944.5 L1269.3,946.3 L1270.0,947.6 L1270.7,948.5 L1271.4,949.0 L1272.1,949.4 L1272.8,949.8 L1273.5,949.9 L1274.2,950.4 L1274.9,950.2 L1275.6,949.7 L1276.3,949.1 L1277.0,948.3 L1277.7,944.8 L1278.4,938.0 L1279.1,929.3 L1279.8,916.5 L1280.5,900.8 L1281.2,882.5 L1281.9,859.6 L1282.6,835.3 L1283.3,810.5 L1284.0,784.6 L1284.7,757.4 L1285.4,729.5 L1286.1,701.3 L1286.8,679.2 L1287.5,665.3 L1288.2,677.7 L1288.9,701.3 L1289.6,727.6 L1290.3,753.8 L1291.0,779.6 L1291.7,804.4 L1292.4,828.0 L1293.1,850.4 L1293.8,870.7 L1294.5,889.3 L1295.2,906.1 L1295.9,921.5 L1296.6,934.9 L1297.3,945.2 L1298.0,954.3 L1298.7,961.7 L1299.4,966.7 L1300.1,970.4 L1300.8,973.4 L1301.5,975.8 L1302.2,978.0 L1302.9,980.2 L1303.6,982.4 L1304.3,984.1 L1305.0,985.2 L1305.7,985.3 L1306.4,984.8 L1307.1,983.8 L1307.8,983.1 L1308.5,983.1 L1309.2,983.3 L1309.9,983.7 L1310.6,983.5 L1311.3,983.0 L1312.0,983.1 L1312.7,983.4 L1313.4,983.7 L1314.1,983.0 L1314.8,980.8 L1315.5,979.3 L1316.2,979.5 L1316.9,980.5 L1317.6,981.6 L1318.3,981.8 L1319.0,980.4 L1319.7,977.7 L1320.4,974.3 L1321.1,970.8 L1321.8,967.5 L1322.5,963.7 L1323.2,959.8 L1323.9,956.4 L1324.6,953.8 L1325.3,951.4 L1326.0,949.2 L1326.7,947.8 L1327.4,947.3 L1328.1,948.1 L1328.8,949.7 L1329.5,951.8 L1330.2,953.8 L1330.9,956.0 L1331.6,958.6 L1332.3,961.3 L1333.0,963.9 L1333.7,966.1 L1334.4,968.2 L1335.1,970.2 L1335.8,972.0 L1336.5,973.4 L1337.2,974.4 L1337.9,975.5 L1338.6,976.5 L1339.3,976.6 L1340.0,976.6 L1340.7,977.1 L1341.4,977.8 L1342.1,977.9 L1342.8,977.9 L1343.5,978.9 L1344.2,978.7 L1344.9,976.8 L1345.6,975.7 L1346.3,976.1 L1347.0,976.7 L1347.7,976.8 L1348.4,976.3 L1349.1,975.3 L1349.8,974.6 L1350.5,974.3 L1351.2,973.7 L1351.9,972.5 L1352.6,971.4 L1353.3,970.3 L1354.0,969.1 L1354.7,967.7 L1355.4,965.9 L1356.1,964.0 L1356.8,962.0 L1357.5,960.1 L1358.2,958.6 L1358.9,957.2 L1359.6,955.8 L1360.3,954.6 L1361.0,953.8 L1361.7,953.5 L1362.4,954.1 L1363.1,955.4 L1363.8,957.2 L1364.5,959.0 L1365.2,960.8 L1365.9,962.7 L1366.6,964.7 L1367.3,966.9 L1368.0,969.1 L1368.7,971.2 L1369.4,973.3 L1370.1,975.4 L1370.8,977.6 L1371.5,979.7 L1372.2,981.8 L1372.9,984.2 L1373.6,986.6 L1374.3,988.8 L1375.0,990.6 L1375.7,991.9 L1376.4,993.1 L1377.1,994.2 L1377.8,995.0 L1378.5,995.3 L1379.2,995.1 L1379.9,995.0 L1380.6,995.1 L1381.3,994.7 L1382.0,994.3 L1382.7,993.8 L1383.4,993.3 L1384.1,992.6 L1384.8,991.4 L1385.5,990.1 L1386.2,989.1 L1386.9,987.9 L1387.6,986.5 L1388.3,985.1 L1389.0,984.2 L1389.7,983.5 L1390.4,983.1 L1391.1,983.0 L1391.8,982.6 L1392.5,982.0 L1393.2,981.3 L1393.9,980.2 L1394.6,978.4 L1395.3,976.0 L1396.0,973.5 L1396.7,971.2 L1397.4,969.3 L1398.1,967.5 L1398.8,965.8 L1399.5,964.0 L1400.2,962.3 L1400.9,960.1 L1401.6,957.6 L1402.3,955.3 L1403.0,953.8 L1403.7,953.8 L1404.4,956.4 L1405.1,960.1 L1405.8,963.4 L1406.5,966.9 L1407.2,969.8 L1407.9,971.3 L1408.6,972.3 L1409.3,972.9 L1410.0,972.9 L1410.7,972.1 L1411.4,971.0 L1412.1,969.3 L1412.8,966.4 L1413.5,962.6" fill="none" stroke="#2e962e" stroke-width="1.15" stroke-linejoin="round"/>
<rect x="412.0" y="188" width="1" height="12" fill="#aaaaf8"/>
<rect x="407.5" y="160" width="11" height="28" rx="2" fill="#fff"/>
<text class="pk" transform="translate(417.0,186) rotate(-90)">2930</text>
<rect x="380.5" y="371" width="1" height="12" fill="#aaaaf8"/>
<rect x="376.0" y="343" width="11" height="28" rx="2" fill="#fff"/>
<text class="pk" transform="translate(385.5,369) rotate(-90)">3006</text>
<rect x="393.1" y="522" width="1" height="12" fill="#aaaaf8"/>
<rect x="388.6" y="494" width="11" height="28" rx="2" fill="#fff"/>
<text class="pk" transform="translate(398.1,520) rotate(-90)">2974</text>
<rect x="436.0" y="601" width="1" height="12" fill="#aaaaf8"/>
<rect x="431.5" y="573" width="11" height="28" rx="2" fill="#fff"/>
<text class="pk" transform="translate(441.0,599) rotate(-90)">2874</text>
<rect x="346.5" y="708" width="1" height="12" fill="#aaaaf8"/>
<rect x="342.0" y="680" width="11" height="28" rx="2" fill="#fff"/>
<text class="pk" transform="translate(351.5,706) rotate(-90)">3086</text>
<rect x="491.0" y="940" width="1" height="12" fill="#aaaaf8"/>
<rect x="486.5" y="912" width="11" height="28" rx="2" fill="#fff"/>
<text class="pk" transform="translate(496.0,938) rotate(-90)">2742</text>
<rect x="966" y="732" width="1" height="259" fill="#ff2020"/>
<rect x="963.5" y="990.5" width="6" height="6" fill="#fff" stroke="#ff2020"/>
<path d="M964.5,721.5 h4 v5 h3.2 l-5.2,5.6 l-5.2,-5.6 h3.2 z" fill="#fff" stroke="#ff2020" stroke-width="1"/>
<rect x="952.5" y="701.5" width="28" height="17" fill="#fff" stroke="#ff2020"/>
<text x="954.5" y="713.5" style="font-size:11px;font-weight:bold;fill:#ff3030" textLength="23.5" lengthAdjust="spacingAndGlyphs">1614</text>
<line x1="1019.5" y1="734" x2="1713" y2="487.7" stroke="#ff1818" stroke-width="1"/>
<rect x="971" y="736" width="85" height="20" fill="#8a8a8a" opacity="0.55"/>
<rect x="969.5" y="734.5" width="85" height="20" fill="#fff" stroke="#767676"/>
<text x="972" y="749.5" style="font-size:12px;fill:#1a1a1a" textLength="80" lengthAdjust="spacingAndGlyphs">C=C stretching</text>
<text x="-1" y="177.5" style="font-size:10px;fill:#1a1a1a" textLength="72.5" lengthAdjust="spacingAndGlyphs">Retention Time:</text>
<text x="-1" y="191.5" style="font-size:10px;fill:#1a1a1a" textLength="192" lengthAdjust="spacingAndGlyphs">Spectrum Range: 550.0000 - 3846.0000</text>
<rect x="0" y="1018.1" width="1446" height="1.3" fill="#4a4a4a"/>
<path d="M1.5,1019 v4.4 M5.5,1019 v7.4 M10.5,1019 v4.4 M14.5,1019 v4.4 M18.5,1019 v4.4 M22.5,1019 v4.4 M26.5,1019 v6.4 M31.5,1019 v4.4 M35.5,1019 v4.4 M39.5,1019 v4.4 M43.5,1019 v4.4 M47.5,1019 v7.4 M51.5,1019 v4.4 M56.5,1019 v4.4 M60.5,1019 v4.4 M64.5,1019 v4.4 M68.5,1019 v6.4 M72.5,1019 v4.4 M77.5,1019 v4.4 M81.5,1019 v4.4 M85.5,1019 v4.4 M89.5,1019 v7.4 M93.5,1019 v4.4 M98.5,1019 v4.4 M102.5,1019 v4.4 M106.5,1019 v4.4 M110.5,1019 v6.4 M114.5,1019 v4.4 M119.5,1019 v4.4 M123.5,1019 v4.4 M127.5,1019 v4.4 M131.5,1019 v7.4 M135.5,1019 v4.4 M140.5,1019 v4.4 M144.5,1019 v4.4 M148.5,1019 v4.4 M152.5,1019 v6.4 M156.5,1019 v4.4 M161.5,1019 v4.4 M165.5,1019 v4.4 M169.5,1019 v4.4 M173.5,1019 v7.4 M177.5,1019 v4.4 M182.5,1019 v4.4 M186.5,1019 v4.4 M190.5,1019 v4.4 M194.5,1019 v6.4 M198.5,1019 v4.4 M203.5,1019 v4.4 M207.5,1019 v4.4 M211.5,1019 v4.4 M215.5,1019 v7.4 M219.5,1019 v4.4 M224.5,1019 v4.4 M228.5,1019 v4.4 M232.5,1019 v4.4 M236.5,1019 v6.4 M240.5,1019 v4.4 M245.5,1019 v4.4 M249.5,1019 v4.4 M253.5,1019 v4.4 M257.5,1019 v7.4 M261.5,1019 v4.4 M266.5,1019 v4.4 M270.5,1019 v4.4 M274.5,1019 v4.4 M278.5,1019 v6.4 M282.5,1019 v4.4 M287.5,1019 v4.4 M291.5,1019 v4.4 M295.5,1019 v4.4 M299.5,1019 v7.4 M303.5,1019 v4.4 M308.5,1019 v4.4 M312.5,1019 v4.4 M316.5,1019 v4.4 M320.5,1019 v6.4 M324.5,1019 v4.4 M329.5,1019 v4.4 M333.5,1019 v4.4 M337.5,1019 v4.4 M341.5,1019 v7.4 M345.5,1019 v4.4 M350.5,1019 v4.4 M354.5,1019 v4.4 M358.5,1019 v4.4 M362.5,1019 v6.4 M366.5,1019 v4.4 M371.5,1019 v4.4 M375.5,1019 v4.4 M379.5,1019 v4.4 M383.5,1019 v7.4 M387.5,1019 v4.4 M392.5,1019 v4.4 M396.5,1019 v4.4 M400.5,1019 v4.4 M404.5,1019 v6.4 M408.5,1019 v4.4 M413.5,1019 v4.4 M417.5,1019 v4.4 M421.5,1019 v4.4 M425.5,1019 v7.4 M429.5,1019 v4.4 M434.5,1019 v4.4 M438.5,1019 v4.4 M442.5,1019 v4.4 M446.5,1019 v6.4 M450.5,1019 v4.4 M455.5,1019 v4.4 M459.5,1019 v4.4 M463.5,1019 v4.4 M467.5,1019 v7.4 M471.5,1019 v4.4 M475.5,1019 v4.4 M480.5,1019 v4.4 M484.5,1019 v4.4 M488.5,1019 v6.4 M492.5,1019 v4.4 M496.5,1019 v4.4 M501.5,1019 v4.4 M505.5,1019 v4.4 M509.5,1019 v7.4 M513.5,1019 v4.4 M517.5,1019 v4.4 M522.5,1019 v4.4 M526.5,1019 v4.4 M530.5,1019 v6.4 M534.5,1019 v4.4 M538.5,1019 v4.4 M543.5,1019 v4.4 M547.5,1019 v4.4 M551.5,1019 v7.4 M555.5,1019 v4.4 M559.5,1019 v4.4 M564.5,1019 v4.4 M568.5,1019 v4.4 M572.5,1019 v6.4 M576.5,1019 v4.4 M580.5,1019 v4.4 M585.5,1019 v4.4 M589.5,1019 v4.4 M593.5,1019 v7.4 M597.5,1019 v4.4 M601.5,1019 v4.4 M606.5,1019 v4.4 M610.5,1019 v4.4 M614.5,1019 v6.4 M618.5,1019 v4.4 M622.5,1019 v4.4 M627.5,1019 v4.4 M631.5,1019 v4.4 M635.5,1019 v7.4 M639.5,1019 v4.4 M643.5,1019 v4.4 M648.5,1019 v4.4 M652.5,1019 v4.4 M656.5,1019 v6.4 M660.5,1019 v4.4 M664.5,1019 v4.4 M669.5,1019 v4.4 M673.5,1019 v4.4 M677.5,1019 v7.4 M681.5,1019 v4.4 M685.5,1019 v4.4 M690.5,1019 v4.4 M694.5,1019 v4.4 M698.5,1019 v6.4 M702.5,1019 v4.4 M706.5,1019 v4.4 M711.5,1019 v4.4 M715.5,1019 v4.4 M719.5,1019 v7.4 M723.5,1019 v4.4 M727.5,1019 v4.4 M732.5,1019 v4.4 M736.5,1019 v4.4 M740.5,1019 v6.4 M744.5,1019 v4.4 M748.5,1019 v4.4 M753.5,1019 v4.4 M757.5,1019 v4.4 M761.5,1019 v7.4 M765.5,1019 v4.4 M769.5,1019 v4.4 M774.5,1019 v4.4 M778.5,1019 v4.4 M782.5,1019 v6.4 M786.5,1019 v4.4 M790.5,1019 v4.4 M795.5,1019 v4.4 M799.5,1019 v4.4 M803.5,1019 v7.4 M807.5,1019 v4.4 M811.5,1019 v4.4 M816.5,1019 v4.4 M820.5,1019 v4.4 M824.5,1019 v6.4 M828.5,1019 v4.4 M832.5,1019 v4.4 M837.5,1019 v4.4 M841.5,1019 v4.4 M845.5,1019 v7.4 M849.5,1019 v4.4 M853.5,1019 v4.4 M858.5,1019 v4.4 M862.5,1019 v4.4 M866.5,1019 v6.4 M870.5,1019 v4.4 M874.5,1019 v4.4 M879.5,1019 v4.4 M883.5,1019 v4.4 M887.5,1019 v7.4 M891.5,1019 v4.4 M895.5,1019 v4.4 M899.5,1019 v4.4 M904.5,1019 v4.4 M908.5,1019 v6.4 M912.5,1019 v4.4 M916.5,1019 v4.4 M920.5,1019 v4.4 M925.5,1019 v4.4 M929.5,1019 v7.4 M933.5,1019 v4.4 M937.5,1019 v4.4 M941.5,1019 v4.4 M946.5,1019 v4.4 M950.5,1019 v6.4 M954.5,1019 v4.4 M958.5,1019 v4.4 M962.5,1019 v4.4 M967.5,1019 v4.4 M971.5,1019 v7.4 M975.5,1019 v4.4 M979.5,1019 v4.4 M983.5,1019 v4.4 M988.5,1019 v4.4 M992.5,1019 v6.4 M996.5,1019 v4.4 M1000.5,1019 v4.4 M1004.5,1019 v4.4 M1009.5,1019 v4.4 M1013.5,1019 v7.4 M1017.5,1019 v4.4 M1021.5,1019 v4.4 M1025.5,1019 v4.4 M1030.5,1019 v4.4 M1034.5,1019 v6.4 M1038.5,1019 v4.4 M1042.5,1019 v4.4 M1046.5,1019 v4.4 M1051.5,1019 v4.4 M1055.5,1019 v7.4 M1059.5,1019 v4.4 M1063.5,1019 v4.4 M1067.5,1019 v4.4 M1072.5,1019 v4.4 M1076.5,1019 v6.4 M1080.5,1019 v4.4 M1084.5,1019 v4.4 M1088.5,1019 v4.4 M1093.5,1019 v4.4 M1097.5,1019 v7.4 M1101.5,1019 v4.4 M1105.5,1019 v4.4 M1109.5,1019 v4.4 M1114.5,1019 v4.4 M1118.5,1019 v6.4 M1122.5,1019 v4.4 M1126.5,1019 v4.4 M1130.5,1019 v4.4 M1135.5,1019 v4.4 M1139.5,1019 v7.4 M1143.5,1019 v4.4 M1147.5,1019 v4.4 M1151.5,1019 v4.4 M1156.5,1019 v4.4 M1160.5,1019 v6.4 M1164.5,1019 v4.4 M1168.5,1019 v4.4 M1172.5,1019 v4.4 M1177.5,1019 v4.4 M1181.5,1019 v7.4 M1185.5,1019 v4.4 M1189.5,1019 v4.4 M1193.5,1019 v4.4 M1198.5,1019 v4.4 M1202.5,1019 v6.4 M1206.5,1019 v4.4 M1210.5,1019 v4.4 M1214.5,1019 v4.4 M1219.5,1019 v4.4 M1223.5,1019 v7.4 M1227.5,1019 v4.4 M1231.5,1019 v4.4 M1235.5,1019 v4.4 M1240.5,1019 v4.4 M1244.5,1019 v6.4 M1248.5,1019 v4.4 M1252.5,1019 v4.4 M1256.5,1019 v4.4 M1261.5,1019 v4.4 M1265.5,1019 v7.4 M1269.5,1019 v4.4 M1273.5,1019 v4.4 M1277.5,1019 v4.4 M1282.5,1019 v4.4 M1286.5,1019 v6.4 M1290.5,1019 v4.4 M1294.5,1019 v4.4 M1298.5,1019 v4.4 M1303.5,1019 v4.4 M1307.5,1019 v7.4 M1311.5,1019 v4.4 M1315.5,1019 v4.4 M1319.5,1019 v4.4 M1323.5,1019 v4.4 M1328.5,1019 v6.4 M1332.5,1019 v4.4 M1336.5,1019 v4.4 M1340.5,1019 v4.4 M1344.5,1019 v4.4 M1349.5,1019 v7.4 M1353.5,1019 v4.4 M1357.5,1019 v4.4 M1361.5,1019 v4.4 M1365.5,1019 v4.4 M1370.5,1019 v6.4 M1374.5,1019 v4.4 M1378.5,1019 v4.4 M1382.5,1019 v4.4 M1386.5,1019 v4.4 M1391.5,1019 v7.4 M1395.5,1019 v4.4 M1399.5,1019 v4.4 M1403.5,1019 v4.4 M1407.5,1019 v4.4 M1412.5,1019 v6.4 M1416.5,1019 v4.4 M1420.5,1019 v4.4 M1424.5,1019 v4.4 M1428.5,1019 v4.4 M1433.5,1019 v7.4 M1437.5,1019 v4.4 M1441.5,1019 v4.4 M1445.5,1019 v4.4" stroke="#5a5a5a" stroke-width="1" fill="none"/>
<text class="ax" x="46.6" y="1036.2" text-anchor="middle">3800</text>
<text class="ax" x="88.6" y="1036.2" text-anchor="middle">3700</text>
<text class="ax" x="130.6" y="1036.2" text-anchor="middle">3600</text>
<text class="ax" x="172.5" y="1036.2" text-anchor="middle">3500</text>
<text class="ax" x="214.5" y="1036.2" text-anchor="middle">3400</text>
<text class="ax" x="256.5" y="1036.2" text-anchor="middle">3300</text>
<text class="ax" x="298.5" y="1036.2" text-anchor="middle">3200</text>
<text class="ax" x="340.5" y="1036.2" text-anchor="middle">3100</text>
<text class="ax" x="382.4" y="1036.2" text-anchor="middle">3000</text>
<text class="ax" x="424.4" y="1036.2" text-anchor="middle">2900</text>
<text class="ax" x="466.4" y="1036.2" text-anchor="middle">2800</text>
<text class="ax" x="508.4" y="1036.2" text-anchor="middle">2700</text>
<text class="ax" x="550.4" y="1036.2" text-anchor="middle">2600</text>
<text class="ax" x="592.3" y="1036.2" text-anchor="middle">2500</text>
<text class="ax" x="634.3" y="1036.2" text-anchor="middle">2400</text>
<text class="ax" x="676.3" y="1036.2" text-anchor="middle">2300</text>
<text class="ax" x="718.3" y="1036.2" text-anchor="middle">2200</text>
<text class="ax" x="760.3" y="1036.2" text-anchor="middle">2100</text>
<text class="ax" x="802.2" y="1036.2" text-anchor="middle">2000</text>
<text class="ax" x="844.2" y="1036.2" text-anchor="middle">1900</text>
<text class="ax" x="886.2" y="1036.2" text-anchor="middle">1800</text>
<text class="ax" x="928.2" y="1036.2" text-anchor="middle">1700</text>
<text class="ax" x="970.2" y="1036.2" text-anchor="middle">1600</text>
<text class="ax" x="1012.1" y="1036.2" text-anchor="middle">1500</text>
<text class="ax" x="1054.1" y="1036.2" text-anchor="middle">1400</text>
<text class="ax" x="1096.1" y="1036.2" text-anchor="middle">1300</text>
<text class="ax" x="1138.1" y="1036.2" text-anchor="middle">1200</text>
<text class="ax" x="1180.1" y="1036.2" text-anchor="middle">1100</text>
<text class="ax" x="1222.0" y="1036.2" text-anchor="middle">1000</text>
<text class="ax" x="1264.0" y="1036.2" text-anchor="middle">900</text>
<text class="ax" x="1306.0" y="1036.2" text-anchor="middle">800</text>
<text class="ax" x="1347" y="1036" textLength="98" lengthAdjust="spacingAndGlyphs">Wavenumber (cm-1)</text>
<rect x="1446.1" y="161" width="1.6" height="879" fill="#ff3838"/>
<text x="1511" y="612.1" style="font-size:40.5px;fill:#e6e6e6" textLength="358.6" lengthAdjust="spacingAndGlyphs">Chemical Structures</text>
<line x1="1690.8" y1="509.8" x2="1690.8" y2="537.9" stroke="#000" stroke-width="2"/>
<line x1="1684.5" y1="554.8" x2="1652.8" y2="572.3" stroke="#000" stroke-width="2"/>
<line x1="1697.1" y1="554.8" x2="1727.3" y2="571.6" stroke="#000" stroke-width="2"/>
<line x1="1693.6" y1="562.5" x2="1723.1" y2="578.7" stroke="#000" stroke-width="2"/>
<line x1="1740.7" y1="572.3" x2="1768.1" y2="556.9" stroke="#000" stroke-width="2"/>
<line x1="1638" y1="570.9" x2="1613.4" y2="556.9" stroke="#000" stroke-width="2"/>
<line x1="1697.1" y1="492.2" x2="1723.8" y2="476.7" stroke="#00f000" stroke-width="2"/>
<line x1="1696.4" y1="500.6" x2="1723.8" y2="485.2" stroke="#00f000" stroke-width="2"/>
<line x1="1647.6" y1="582.6" x2="1647.6" y2="614.3" stroke="#000" stroke-width="2"/>
<line x1="1655.3" y1="585" x2="1655.3" y2="617.8" stroke="#000" stroke-width="2"/>
<line x1="1734.5" y1="581" x2="1734.5" y2="613.6" stroke="#000" stroke-width="2"/>
<line x1="1652.9" y1="630.3" x2="1684.6" y2="647.6" stroke="#000" stroke-width="2"/>
<line x1="1697.1" y1="648.1" x2="1727.6" y2="630.7" stroke="#000" stroke-width="2"/>
<line x1="1696.1" y1="638.9" x2="1723.5" y2="623.3" stroke="#000" stroke-width="2"/>
<line x1="1690.8" y1="658.75" x2="1690.8" y2="689.3" stroke="#000" stroke-width="2"/>
<text class="ser" x="1733.7" y="579.1" text-anchor="middle" style="font-size:19px;fill:#1414ff;font-weight:normal">1</text>
<text class="ser" x="1690.3" y="554.0" text-anchor="middle" style="font-size:19px;fill:#1414ff;font-weight:normal">2</text>
<text class="ser" x="1645.5" y="579.3" text-anchor="middle" style="font-size:19px;fill:#1414ff;font-weight:normal">3</text>
<text class="ser" x="1645.9" y="629.1" text-anchor="middle" style="font-size:19px;fill:#1414ff;font-weight:normal">4</text>
<text class="ser" x="1690" y="655.3" text-anchor="middle" style="font-size:19px;fill:#1414ff;font-weight:normal">5</text>
<text class="ser" x="1733.5" y="628.8" text-anchor="middle" style="font-size:19px;fill:#1414ff;font-weight:normal">6</text>
<text class="ser" x="1777.3" y="577.3" text-anchor="middle" style="font-size:19px;fill:#1414ff;font-weight:normal">7</text>
<text class="ser" x="1608.5" y="577.3" text-anchor="middle" style="font-size:19px;fill:#1414ff;font-weight:normal">10</text>
<text class="ser" x="1695" y="729.6" text-anchor="middle" style="font-size:19px;fill:#1414ff;font-weight:normal">11</text>
<text class="ser" x="1690.1" y="504.1" text-anchor="middle" style="font-size:19px;fill:#00f000;font-weight:bold">8</text>
<text class="ser" x="1733.7" y="503.4" text-anchor="middle" style="font-size:19px;fill:#00f000;font-weight:bold">9</text>
<text class="ser" x="1769.3" y="559" style="font-size:25px;fill:#000;font-weight:normal"><tspan>CH</tspan><tspan dy="7" style="font-size:18.5px">3</tspan><tspan dy="-7" style="font-size:1px"> </tspan></text>
<text class="ser" x="1566.3" y="559" style="font-size:25px;fill:#000;font-weight:normal"><tspan>H</tspan><tspan dy="7" style="font-size:18.5px">3</tspan><tspan dy="-7" style="font-size:1px"> </tspan><tspan>C</tspan></text>
<text class="ser" x="1683" y="710.8" style="font-size:25px;fill:#000;font-weight:normal"><tspan>CH</tspan><tspan dy="7" style="font-size:18.5px">3</tspan><tspan dy="-7" style="font-size:1px"> </tspan></text>
<text class="ser" x="1726.6" y="483.8" style="font-size:24px;fill:#00f000;font-weight:bold"><tspan>CH</tspan><tspan dy="7" style="font-size:18.5px">2</tspan><tspan dy="-7" style="font-size:1px"> </tspan></text>
<text x="1460.5" y="1032" style="font-size:11px;fill:#1c1c1c" textLength="56" lengthAdjust="spacingAndGlyphs">146.109550</text>
<text x="1525" y="1032" style="font-size:11px;fill:#1c1c1c">ID: 1</text>
<text x="1555" y="1032" style="font-size:11px;fill:#1c1c1c">1/1</text>
<text x="1577.5" y="1032" style="font-size:11px;fill:#1c1c1c" textLength="38" lengthAdjust="spacingAndGlyphs">C11H14</text>
<path d="M1622.5,1025.5 h5 M1622.3,1027.6 h5.4 l-2.7,3 z" stroke="#111" stroke-width="1" fill="#111"/>
<text x="-1" y="1056.5" style="font-size:11px;fill:#1a1a1a" textLength="69" lengthAdjust="spacingAndGlyphs">STYRENE.ESP</text>
<text x="76" y="1056.5" style="font-size:11px;fill:#1a1a1a" textLength="66" lengthAdjust="spacingAndGlyphs">ASSIGNMENT</text>
<text x="178" y="1056.5" style="font-size:11px;fill:#1a1a1a" textLength="44" lengthAdjust="spacingAndGlyphs">470 cm-1</text>
<text x="292.5" y="1056.5" style="font-size:11px;fill:#1a1a1a" textLength="33" lengthAdjust="spacingAndGlyphs">0.4283</text>
<path d="M1817.5,1059 V1044.5 H1839.5 V1059" fill="#fbf3dc" stroke="#8ea6cc"/>
<text x="1819.5" y="1057" style="font-size:11px;fill:#111">cm</text>
<text x="1832" y="1051.5" style="font-size:7px;fill:#111;font-weight:bold">-1</text>
<rect x="1843" y="1046" width="2" height="11" fill="#b7c9ef"/>
<text x="1851" y="1056.5" style="font-size:11px;fill:#8a8a8a;font-style:italic">μ</text><text x="1857" y="1056.5" style="font-size:11px;fill:#8a8a8a">m</text>
<text x="1874" y="1056.5" style="font-size:11px;fill:#8a8a8a">nm</text>
<rect x="1896" y="1046" width="1" height="11" fill="#b7c9ef"/>
<text x="1903" y="1056.5" style="font-size:11px;fill:#8a8a8a">pts</text>
<path d="M17.5,158 V140 q0,-3 3,-3 H155 q3,0 3,3 V158 z" fill="url(#gTabSel)"/>
<path d="M159.5,158 V139.5 q0,-2.5 2.5,-2.5 H176.5 q2.5,0 2.5,2.5 V158 z" fill="#c2e0ff"/>
<path d="M166,145.5 h7.6 l-3.8,4 z" fill="#111"/>
<text x="45.5" y="153" style="font-size:13px;font-weight:bold;fill:#0c0c0c" textLength="88" lengthAdjust="spacingAndGlyphs">STYRENE.ESP</text>
<rect x="23" y="143.5" width="10" height="9.5" fill="#e01010"/><rect x="25" y="144" width="6" height="4" fill="#f4d8d8"/><rect x="26" y="149.5" width="4" height="3.5" fill="#fff"/><rect x="28.3" y="150" width="1.2" height="3" fill="#b00"/>
<rect x="1430" y="138" width="18" height="16" rx="1.5" fill="#bcdcff"/>
<path d="M1432.5,141 v10 M1445.5,141 v10 M1433,146 h12 M1433.5,146 l2.6,-2 v4 z M1445,146 l-2.6,-2 v4 z" stroke="#111" stroke-width="1" fill="#111"/>
<text x="3.8" y="127" style="font-size:11px;fill:#151515" textLength="57.5" lengthAdjust="spacingAndGlyphs">Organizer...</text>
<rect x="75" y="118" width="1" height="9" fill="#b3c4ea"/>
<text x="86.7" y="127" style="font-size:11px;fill:#151515" textLength="54.3" lengthAdjust="spacingAndGlyphs">Batch ASV</text>
<text x="157.3" y="127" style="font-size:11px;fill:#151515" textLength="54.3" lengthAdjust="spacingAndGlyphs">Batch ASV</text>
<text x="228" y="127" style="font-size:11px;fill:#151515" textLength="54.3" lengthAdjust="spacingAndGlyphs">Batch ASV</text>
<rect x="56.0" y="22" width="1.6" height="58" fill="#cfe0f9" opacity="0.9"/>
<rect x="256.0" y="22" width="1.6" height="58" fill="#cfe0f9" opacity="0.9"/>
<rect x="387.8" y="22" width="1.6" height="58" fill="#cfe0f9" opacity="0.9"/>
<rect x="511.9" y="22" width="1.6" height="58" fill="#cfe0f9" opacity="0.9"/>
<rect x="578.4" y="22" width="1.6" height="58" fill="#cfe0f9" opacity="0.9"/>
<rect x="649.9" y="22" width="1.6" height="58" fill="#cfe0f9" opacity="0.9"/>
<rect x="720.7" y="22" width="1.6" height="58" fill="#cfe0f9" opacity="0.9"/>
<rect x="822.1" y="22" width="1.6" height="58" fill="#cfe0f9" opacity="0.9"/>
<text class="rb" x="8.8" y="74" textLength="28.4" lengthAdjust="spacingAndGlyphs">Open</text>
<text class="rb" x="117.8" y="74" textLength="78.9" lengthAdjust="spacingAndGlyphs">Peak Detection</text>
<text class="rb" x="299.1" y="74" textLength="45.9" lengthAdjust="spacingAndGlyphs">Interpret</text>
<text class="rb" x="425.8" y="74" textLength="48.2" lengthAdjust="spacingAndGlyphs">Database</text>
<text class="rb" x="527.5" y="74" textLength="35.0" lengthAdjust="spacingAndGlyphs">Report</text>
<text class="rb" x="583.6" y="74" textLength="63.1" lengthAdjust="spacingAndGlyphs">ChemSketch</text>
<text class="rb" x="655.4" y="74" textLength="61.8" lengthAdjust="spacingAndGlyphs">AutoChrom</text>
<text class="rb" x="745.4" y="74" textLength="56.5" lengthAdjust="spacingAndGlyphs">MetaSense</text>
<text class="rb" x="1846.2" y="65.8" textLength="50.6" lengthAdjust="spacingAndGlyphs">Customer</text>
<text class="rb" x="1857.3" y="77.5" textLength="30.4" lengthAdjust="spacingAndGlyphs">Portal</text>
<path d="M37.6,42.8 h6.8 l-3.4,-3.8 z" fill="#0a0a0a"/>
<path d="M104.1,42.8 h6.8 l-3.4,-3.8 z" fill="#0a0a0a"/>
<path d="M303.6,42.8 h6.8 l-3.4,-3.8 z" fill="#0a0a0a"/>
<path d="M434.6,42.8 h6.8 l-3.4,-3.8 z" fill="#0a0a0a"/>
<path d="M559.6,42.8 h6.8 l-3.4,-3.8 z" fill="#0a0a0a"/>
<defs>
<linearGradient id="gFold" x1="0" y1="0" x2="0" y2="1"><stop offset="0" stop-color="#f7a21b"/><stop offset="0.18" stop-color="#fcd06a"/><stop offset="0.5" stop-color="#ffedb0"/><stop offset="1" stop-color="#f6b93a"/></linearGradient>
<linearGradient id="gDb" x1="0" y1="0" x2="1" y2="0"><stop offset="0" stop-color="#a9a7de"/><stop offset="0.3" stop-color="#f4f4ff"/><stop offset="0.6" stop-color="#a5a3dc"/><stop offset="1" stop-color="#7f7cc4"/></linearGradient>
<linearGradient id="gPlus" x1="0" y1="0" x2="0" y2="1"><stop offset="0" stop-color="#58d058"/><stop offset="0.4" stop-color="#0aa80a"/><stop offset="1" stop-color="#56c81c"/></linearGradient>
<linearGradient id="gPage" x1="0" y1="0" x2="1" y2="1"><stop offset="0" stop-color="#ffffff"/><stop offset="1" stop-color="#e4e6ec"/></linearGradient>
<linearGradient id="gPen" x1="0" y1="0" x2="1" y2="1"><stop offset="0" stop-color="#ffd34a"/><stop offset="1" stop-color="#f08a00"/></linearGradient>
<radialGradient id="gBall" cx="0.4" cy="0.35" r="0.7"><stop offset="0" stop-color="#a8b8ff"/><stop offset="0.5" stop-color="#3a4cff"/><stop offset="1" stop-color="#1616c8"/></radialGradient>
<linearGradient id="gRuler" x1="0" y1="0" x2="0" y2="1"><stop offset="0" stop-color="#ffe000"/><stop offset="1" stop-color="#ff7a00"/></linearGradient>
</defs>
<g>
<path d="M6.5,37 V30.5 q0,-1.2 1.2,-1.2 h5.5 l1.6,2 h15 q1.2,0 1.2,1.2 V37 z" fill="#f09a1c"/>
<path d="M8.6,30.2 L24.6,26.3 q3,-0.8 3.5,1.4 L29.6,36 L10.4,39.5 z" fill="#fdfdfd" stroke="#e3e7ee" stroke-width="0.6"/>
<circle cx="24.3" cy="29.3" r="2" fill="#e6e8ee"/>
<rect x="5" y="35.5" width="26.6" height="17" rx="1.6" fill="url(#gFold)" stroke="#f09c22" stroke-width="0.8"/>
<path d="M6.5,50 C12,43 22,39 30.5,38.2 V37 H6.5 z" fill="#fff" opacity="0.45"/>
</g>
<path d="M70.5,54.4 L72.4,54.4 C74.7,54.4 75.7,32.5 76.6,32.5 C77.5,32.5 78.5,54.4 80.8,54.4 L85.2,54.4 C87.5,54.4 88.5,49 89.4,49 C90.3,49 91.3,54.4 93.6,54.4 L98,54.4" fill="none" stroke="#4f5560" stroke-width="1.3"/>
<path d="M97.27,33.92 L97.27,35.28 L95.51,35.61 L95.24,36.63 L96.60,37.79 L95.91,38.98 L94.23,38.38 L93.48,39.13 L94.08,40.81 L92.89,41.50 L91.73,40.14 L90.71,40.41 L90.38,42.17 L89.02,42.17 L88.69,40.41 L87.67,40.14 L86.51,41.50 L85.32,40.81 L85.92,39.13 L85.17,38.38 L83.49,38.98 L82.80,37.79 L84.16,36.63 L83.89,35.61 L82.13,35.28 L82.13,33.92 L83.89,33.59 L84.16,32.57 L82.80,31.41 L83.49,30.22 L85.17,30.82 L85.92,30.07 L85.32,28.39 L86.51,27.70 L87.67,29.06 L88.69,28.79 L89.02,27.03 L90.38,27.03 L90.71,28.79 L91.73,29.06 L92.89,27.70 L94.08,28.39 L93.48,30.07 L94.23,30.82 L95.91,30.22 L96.60,31.41 L95.24,32.57 L95.51,33.59 z" fill="#9b9bab" stroke="#7d7d8f" stroke-width="0.5"/>
<circle cx="89.7" cy="34.6" r="4.3" fill="#c4c4d2"/><circle cx="89.7" cy="34.6" r="2.6" fill="#8d8da0"/><circle cx="89.7" cy="34.6" r="1.3" fill="#f4f6ff"/>
<text x="72.6" y="30.6" style="font-size:3.6px;font-weight:bold;fill:#2222cc" textLength="8.6" lengthAdjust="spacingAndGlyphs">12.8</text>
<text x="85.4" y="47.2" style="font-size:3.6px;font-weight:bold;fill:#2222cc" textLength="8.6" lengthAdjust="spacingAndGlyphs">45.6</text>
<path d="M116,54.3 L117.6,54.3 C119.9,54.3 120.8,30 121.7,30 C122.6,30 123.5,54.3 125.8,54.3 L132.4,54.3 C134.7,54.3 135.7,44.8 136.6,44.8 C137.5,44.8 138.5,54.3 140.8,54.3 L145,54.3" fill="none" stroke="#4f5560" stroke-width="1.3"/>
<rect x="115.9" y="35.6" width="27" height="2" fill="#f0283c"/>
<path d="M149.6,54.3 L159.3,54.3 C161.8,54.3 162.9,28.6 163.9,28.6 C164.9,28.6 166.0,54.3 168.5,54.3 L177.5,54.3" fill="none" stroke="#4f5560" stroke-width="1.3"/>
<rect x="163.5" y="29" width="1" height="25" fill="#e8283c"/><circle cx="164" cy="55" r="1.2" fill="none" stroke="#e8687a" stroke-width="0.7"/>
<path d="M165.0,32.3 L165.0,43.7 L167.7,41.2 L169.7,45.5 L171.6,44.6 L169.7,40.5 L173.3,40.5 z" fill="#fff" stroke="#111" stroke-width="0.9" stroke-linejoin="round"/>
<rect x="188.5" y="24.5" width="17" height="32" fill="none" stroke="#ee8898" stroke-width="0.9"/>
<path d="M183,54.3 L192.5,54.3 C195.0,54.3 196.1,28.6 197.1,28.6 C198.1,28.6 199.2,54.3 201.7,54.3 L211,54.3" fill="none" stroke="#4f5560" stroke-width="1.3"/>
<path d="M189,54.3 C195,54 196.5,48 198,42 C199.5,36 200.5,33.6 205.5,33.5" fill="none" stroke="#e8283c" stroke-width="1.3"/>
<rect x="196.5" y="29" width="1.2" height="26" fill="#e8687a" opacity="0.8"/>
<path d="M205.2,32.3 L205.2,43.7 L207.9,41.2 L209.9,45.5 L211.8,44.6 L209.9,40.5 L213.5,40.5 z" fill="#fff" stroke="#111" stroke-width="0.9" stroke-linejoin="round"/>
<path d="M216,45.5 h1.5 C219.5,45.5 219.8,29 221,29 C222.3,29 222.2,47.5 224.5,47.5 C226,47.5 226,44 227.2,44 C228.6,44 228,52 229.5,52 C230.6,52 230.3,50 231.2,50 C232,50 232,54.3 233.5,54.3 H245" fill="none" stroke="#4f5560" stroke-width="1.2"/>
<path d="M230.6,55 L241,41.5 M239.6,55 L229.4,41.5" stroke="#c9c6c0" stroke-width="1.5" fill="none"/>
<ellipse cx="228.2" cy="39.4" rx="2.6" ry="3.4" transform="rotate(-35 228.2 39.4)" fill="none" stroke="#e06a6a" stroke-width="1.6"/>
<ellipse cx="242" cy="39.4" rx="2.6" ry="3.4" transform="rotate(35 242 39.4)" fill="none" stroke="#e06a6a" stroke-width="1.6"/>
<path d="M229.8,42 L235,48 M240.4,42 L235.4,48" stroke="#d85a5a" stroke-width="1.8"/>
<rect x="267.6" y="21.8" width="32.6" height="37.8" rx="1.2" fill="url(#gHi)" stroke="#ffd02e" stroke-width="1.4"/>
<rect x="272.2" y="37.8" width="8" height="16" fill="#5cc05c" opacity="0.75"/>
<path d="M270,53.4 L273.2,53.4 C274.8,53.4 275.5,40 276.2,40 C276.9,40 277.6,53.4 279.2,53.4 L285.3,53.4 C287.3,53.4 288.1,47.6 288.9,47.6 C289.7,47.6 290.5,53.4 292.5,53.4 L297.7,53.4" fill="none" stroke="#5c6a52" stroke-width="1.2"/>
<path d="M291.5,24.6 L298.8,28.9 V37.3 L291.5,41.3" fill="none" stroke="#111" stroke-width="1.2"/>
<path d="M291.5,24.6 L284.2,28.9" fill="none" stroke="#111" stroke-width="1.2"/>
<path d="M284.2,28.9 V37.3 L291.5,41.3 L298.8,37.3" fill="none" stroke="#f0283c" stroke-width="1.2"/>
<path d="M286.3,29.9 L291.4,27 M296.9,30 V36.2 M286.5,36.3 L291.5,39.1" fill="none" stroke="#111" stroke-width="1"/>
<path d="M286.5,36.3 L291.5,39.1" stroke="#f0283c" stroke-width="1"/>
<path d="M276.2,46.4 L284.2,38.2" stroke="#f0283c" stroke-width="1.3"/>
<text x="273.6" y="33.8" style="font-size:3.4px;font-weight:bold;fill:#e02030" textLength="7" lengthAdjust="spacingAndGlyphs">83.8</text>
<rect x="273.4" y="35" width="7.4" height="0.9" fill="#e86070"/>
<path d="M315,24.5 H333.5 L340.3,31 V56 H315 z" fill="#d4e1f4" opacity="0.95"/>
<path d="M333.5,24.5 V31 H340.3 z" fill="#e8eefa"/>
<path d="M327.3,32.3 L334.2,36.2 V44.2 L327.3,48.2 L320.4,44.2 V36.2 z M322.3,37 L327.2,34.3 M332.4,43.3 L327.4,46.2" fill="none" stroke="#1c1c1c" stroke-width="1.2"/>
<path d="M319.2,50.6 L321,45.6 L340.6,25.7 L344,28.7 L324,48.6 z" fill="url(#gPen)" stroke="#c87800" stroke-width="0.4"/>
<path d="M319.2,50.6 L321,45.6 L324,48.6 z" fill="#f2d2a0"/><path d="M319.2,50.6 L320,48.6 L321.2,49.8 z" fill="#333"/>
<path d="M340.6,25.7 L342.3,24.3 q1.7,-0.8 2.7,0.6 q1,1.4 -0.3,2.6 L344,28.7 z" fill="#f0977a"/>
<path d="M339.2,27.1 L340.6,25.7 L344,28.7 L342.6,30.1 z" fill="#c0c4cc"/>
<path d="M349,53.4 L351.7,53.4 C353.7,53.4 354.5,40 355.3,40 C356.1,40 356.9,53.4 358.9,53.4 L364.1,53.4 C366.1,53.4 366.9,47.6 367.7,47.6 C368.5,47.6 369.3,53.4 371.3,53.4 L376,53.4" fill="none" stroke="#56627a" stroke-width="1.25"/>
<path d="M358.6,29 H372.4 V39.3 H362.2 L360.4,42 L360.2,39.3 H358.6 z" fill="#fff" stroke="#6a58cc" stroke-width="1"/>
<rect x="360.2" y="31.5" width="10.6" height="2" fill="#d0d0d4"/><rect x="360.2" y="35" width="10.6" height="2" fill="#dcdce0"/>
<defs><linearGradient id="gBin" x1="0" y1="0" x2="1" y2="1"><stop offset="0" stop-color="#b4b4b4"/><stop offset="0.45" stop-color="#6a6a6a"/><stop offset="1" stop-color="#3c3c3c"/></linearGradient></defs>
<g>
<path d="M413.5,31 L420.5,29.5 L426,34.5 L421,40 z" fill="#7c7c7e"/>
<path d="M416.3,26.4 L419.5,29.8 L407.2,44.8 L401,38.4 z" fill="url(#gBin)"/>
<path d="M414.8,25.6 L417.6,24.6 L421.2,28.4 L419.8,30.6 z" fill="#3e3e40"/>
<ellipse cx="404.1" cy="41.6" rx="4.5" ry="3" transform="rotate(45 404.1 41.6)" fill="#2e2e30"/>
<ellipse cx="403.9" cy="41.8" rx="3.3" ry="2" transform="rotate(45 403.9 41.8)" fill="#6a94ff"/>
<path d="M425.4,33.6 L430,36.4 L423.4,51.6 L415.2,46.6 z" fill="url(#gBin)"/>
<path d="M424.6,31.6 L427.4,30.8 L431.4,34.4 L430.2,37 z" fill="#3e3e40"/>
<ellipse cx="419.3" cy="49.1" rx="4.8" ry="3.2" transform="rotate(31 419.3 49.1)" fill="#2e2e30"/>
<ellipse cx="419.1" cy="49.3" rx="3.5" ry="2.2" transform="rotate(31 419.1 49.3)" fill="#5f8cff"/>
<path d="M417.6,27.6 L405.4,40" stroke="#d0d0d0" stroke-width="0.8" opacity="0.7"/><path d="M427.6,35.6 L420.4,47.6" stroke="#c8c8c8" stroke-width="0.8" opacity="0.6"/>
</g>
<g opacity="1.0"><path d="M447.4,43.86666666666666 v7.133333333333333 a11.8,4.2 0 0 0 23.6,0 v-7.133333333333333 z" fill="url(#gDb)"/><ellipse cx="459.2" cy="43.86666666666666" rx="11.8" ry="4.2" fill="#a29fda"/><path d="M447.4,50.99999999999999 a11.8,4.2 0 0 0 23.6,0" fill="none" stroke="#8a87cc" stroke-width="0.6"/><path d="M447.4,36.733333333333334 v7.133333333333333 a11.8,4.2 0 0 0 23.6,0 v-7.133333333333333 z" fill="url(#gDb)"/><ellipse cx="459.2" cy="36.733333333333334" rx="11.8" ry="4.2" fill="#a29fda"/><path d="M447.4,43.86666666666667 a11.8,4.2 0 0 0 23.6,0" fill="none" stroke="#8a87cc" stroke-width="0.6"/><path d="M447.4,29.599999999999998 v7.133333333333333 a11.8,4.2 0 0 0 23.6,0 v-7.133333333333333 z" fill="url(#gDb)"/><ellipse cx="459.2" cy="29.599999999999998" rx="11.8" ry="4.2" fill="#a29fda"/><path d="M447.4,36.733333333333334 a11.8,4.2 0 0 0 23.6,0" fill="none" stroke="#8a87cc" stroke-width="0.6"/><ellipse cx="459.2" cy="29.599999999999998" rx="11.200000000000001" ry="3.7" fill="#b3b1e4"/></g>
<g opacity="1.0"><path d="M476.6,43.86666666666666 v7.133333333333333 a11.8,4.2 0 0 0 23.6,0 v-7.133333333333333 z" fill="url(#gDb)"/><ellipse cx="488.40000000000003" cy="43.86666666666666" rx="11.8" ry="4.2" fill="#a29fda"/><path d="M476.6,50.99999999999999 a11.8,4.2 0 0 0 23.6,0" fill="none" stroke="#8a87cc" stroke-width="0.6"/><path d="M476.6,36.733333333333334 v7.133333333333333 a11.8,4.2 0 0 0 23.6,0 v-7.133333333333333 z" fill="url(#gDb)"/><ellipse cx="488.40000000000003" cy="36.733333333333334" rx="11.8" ry="4.2" fill="#a29fda"/><path d="M476.6,43.86666666666667 a11.8,4.2 0 0 0 23.6,0" fill="none" stroke="#8a87cc" stroke-width="0.6"/><path d="M476.6,29.599999999999998 v7.133333333333333 a11.8,4.2 0 0 0 23.6,0 v-7.133333333333333 z" fill="url(#gDb)"/><ellipse cx="488.40000000000003" cy="29.599999999999998" rx="11.8" ry="4.2" fill="#a29fda"/><path d="M476.6,36.733333333333334 a11.8,4.2 0 0 0 23.6,0" fill="none" stroke="#8a87cc" stroke-width="0.6"/><ellipse cx="488.40000000000003" cy="29.599999999999998" rx="11.200000000000001" ry="3.7" fill="#b3b1e4"/></g>
<path d="M490.8,39.3 h6.2 v5.800000000000001 h5.800000000000001 v6.2 h-5.800000000000001 v5.800000000000001 h-6.2 v-5.800000000000001 h-5.800000000000001 v-6.2 h5.800000000000001 z" fill="url(#gPlus)" stroke="#2aa22a" stroke-width="0.5"/>
<path d="M526,24 H546.5 L553.6,31 V55.3 H526 z" fill="url(#gPage)" stroke="#c9ccd6" stroke-width="0.7"/>
<path d="M526.6,55.6 H553.9" stroke="#9aa0b4" stroke-width="0.9" opacity="0.7"/>
<path d="M546.5,24 V31 H553.6 z" fill="#e9ebf2" stroke="#c9ccd6" stroke-width="0.5"/>
<rect x="527.2" y="24.6" width="17.8" height="3" fill="#7a76ee" opacity="0.75"/>
<path d="M530.4,45.3 L531.5,45.3 C533.1,45.3 533.8,32 534.4,32 C535.0,32 535.7,45.3 537.3,45.3 L540.5,45.3 C542.1,45.3 542.8,39.2 543.5,39.2 C544.2,39.2 544.9,45.3 546.5,45.3 L549,45.3" fill="none" stroke="#5a5a5a" stroke-width="1.1"/>
<rect x="530.4" y="47.2" width="18.6" height="0.8" fill="#bcbcbc"/><rect x="530.4" y="49.2" width="18.6" height="2.2" fill="#c9c9c9"/>
<path d="M604.5,25.5 H630.4 V48 H601.4 V28.6 z" fill="#e8f0ff" stroke="#1a3be0" stroke-width="1.1"/>
<path d="M601.4,28.6 L604.5,25.5 V28.6 z" fill="#fff"/>
<rect x="600" y="50.2" width="31.8" height="6.2" fill="url(#gRuler)"/>
<path d="M609.5,50.2 v1.5 M611.7,50.2 v2.4 M613.9,50.2 v1.5 M616.1,50.2 v2.4 M618.3,50.2 v1.5 M620.5,50.2 v2.4 M622.7,50.2 v1.5 M624.9,50.2 v2.4 M627.1,50.2 v1.5 M629.3,50.2 v2.4" stroke="#d43c00" stroke-width="0.8"/>
<path d="M602.8,56.4 V47 L605.4,39.2 L607.9,47 V56.4 z" fill="#e01010"/><path d="M604.6,56.4 V47.5 L605.4,45 L606.2,47.5 V56.4 z" fill="#fff"/>
<path d="M622.7,27.8 L627.9,30.8 V36.8 L622.7,39.8 L617.5,36.8 V30.8 z" fill="none" stroke="#111" stroke-width="1.3"/>
<path d="M619.6,31.8 L622.6,30.1 M625.9,31.9 V35.7 M619.6,35.8 L622.6,37.5" stroke="#111" stroke-width="1"/>
<path d="M622.6,42 C620,45.5 614,45.5 611,41.8" fill="none" stroke="#1a3be0" stroke-width="1.3"/><path d="M609.3,40 L613.6,40.8 L610.6,43.8 z" fill="#1a3be0"/>
<text x="604" y="37.6" style="font-size:6px;font-weight:bold;fill:#e8283c" textLength="8" lengthAdjust="spacingAndGlyphs">1,1'</text>
<path d="M609.2,29.6 l1.6,-2 l1,1.6 l1.6,-2 l1,1.6 l1.4,-1.8" stroke="#1a1ae6" stroke-width="1.1" fill="none"/>
<rect x="685.6" y="23.2" width="16.2" height="18" fill="#eef0f4" stroke="#b4b8c4" stroke-width="0.6"/>
<rect x="687.6" y="30" width="1.7" height="10.399999999999999" fill="#d85050"/>
<rect x="690.4" y="26.5" width="1.7" height="13.899999999999999" fill="#d85050"/>
<rect x="693.2" y="33" width="1.7" height="7.399999999999999" fill="#d85050"/>
<rect x="696" y="28" width="1.7" height="12.399999999999999" fill="#d85050"/>
<rect x="698.8" y="31" width="1.7" height="9.399999999999999" fill="#d85050"/>
<path d="M673.4,27 L682.5,23.4 L687.6,25.6 V28.6 L675.2,30 z" fill="#27479c"/>
<path d="M674.4,30 L687,28.6 L685,34.6 L676,35 z" fill="#c2c8d4" opacity="0.9"/>
<path d="M673.4,38.8 L675.6,36.4 L692.8,48.6 L691,51.6 z" fill="#a9a59e"/><circle cx="674" cy="37.6" r="2.2" fill="#b9b5ae"/>
<rect x="681.2" y="31" width="1.8" height="19" fill="#e8b8c4"/><circle cx="682.1" cy="50.3" r="1.5" fill="#e03030"/>
<line x1="748.4" y1="40.5" x2="748.4" y2="46.5" stroke="#1b6a9e" stroke-width="0.9" stroke-dasharray="2.2 1.2"/><circle cx="748.4" cy="48.1" r="1.35" fill="#1b6a9e"/><line x1="746.1" y1="39.6" x2="741.9" y2="43.8" stroke="#1b6a9e" stroke-width="0.9" stroke-dasharray="2.2 1.2"/><circle cx="740.8" cy="44.9" r="1.35" fill="#1b6a9e"/><line x1="746.1" y1="35.0" x2="741.9" y2="30.8" stroke="#1b6a9e" stroke-width="0.9" stroke-dasharray="2.2 1.2"/><circle cx="740.8" cy="29.7" r="1.35" fill="#1b6a9e"/><line x1="748.4" y1="34.1" x2="748.4" y2="28.1" stroke="#1b6a9e" stroke-width="0.9" stroke-dasharray="2.2 1.2"/><circle cx="748.4" cy="26.5" r="1.35" fill="#1b6a9e"/><line x1="750.7" y1="35.0" x2="754.9" y2="30.8" stroke="#1b6a9e" stroke-width="0.9" stroke-dasharray="2.2 1.2"/><circle cx="756.0" cy="29.7" r="1.35" fill="#1b6a9e"/><line x1="750.7" y1="39.6" x2="754.9" y2="43.8" stroke="#1b6a9e" stroke-width="0.9" stroke-dasharray="2.2 1.2"/><circle cx="756.0" cy="44.9" r="1.35" fill="#1b6a9e"/>
<text x="724.2" y="40.4" style="font-size:9.5px;font-weight:bold;fill:#2a9bc6" textLength="45" lengthAdjust="spacingAndGlyphs">Meta<tspan fill="#1f5ca6">S</tspan>ense</text>
<g opacity="0.55">
<g opacity="1.0"><path d="M793.4,43.53333333333333 v6.866666666666667 a12.1,4.2 0 0 0 24.2,0 v-6.866666666666667 z" fill="url(#gDb)"/><ellipse cx="805.5" cy="43.53333333333333" rx="12.1" ry="4.2" fill="#a29fda"/><path d="M793.4,50.4 a12.1,4.2 0 0 0 24.2,0" fill="none" stroke="#8a87cc" stroke-width="0.6"/><path d="M793.4,36.66666666666667 v6.866666666666667 a12.1,4.2 0 0 0 24.2,0 v-6.866666666666667 z" fill="url(#gDb)"/><ellipse cx="805.5" cy="36.66666666666667" rx="12.1" ry="4.2" fill="#a29fda"/><path d="M793.4,43.53333333333334 a12.1,4.2 0 0 0 24.2,0" fill="none" stroke="#8a87cc" stroke-width="0.6"/><path d="M793.4,29.8 v6.866666666666667 a12.1,4.2 0 0 0 24.2,0 v-6.866666666666667 z" fill="url(#gDb)"/><ellipse cx="805.5" cy="29.8" rx="12.1" ry="4.2" fill="#a29fda"/><path d="M793.4,36.66666666666667 a12.1,4.2 0 0 0 24.2,0" fill="none" stroke="#8a87cc" stroke-width="0.6"/><ellipse cx="805.5" cy="29.8" rx="11.5" ry="3.7" fill="#b3b1e4"/></g>
</g>
<line x1="798.4" y1="43.5" x2="798.4" y2="49.5" stroke="#1b6a9e" stroke-width="0.9" stroke-dasharray="2.2 1.2"/><circle cx="798.4" cy="51.1" r="1.35" fill="#1b6a9e"/><line x1="796.1" y1="42.6" x2="791.9" y2="46.8" stroke="#1b6a9e" stroke-width="0.9" stroke-dasharray="2.2 1.2"/><circle cx="790.8" cy="47.9" r="1.35" fill="#1b6a9e"/><line x1="796.1" y1="38.0" x2="791.9" y2="33.8" stroke="#1b6a9e" stroke-width="0.9" stroke-dasharray="2.2 1.2"/><circle cx="790.8" cy="32.7" r="1.35" fill="#1b6a9e"/><line x1="798.4" y1="37.1" x2="798.4" y2="31.1" stroke="#1b6a9e" stroke-width="0.9" stroke-dasharray="2.2 1.2"/><circle cx="798.4" cy="29.5" r="1.35" fill="#1b6a9e"/><line x1="800.7" y1="38.0" x2="804.9" y2="33.8" stroke="#1b6a9e" stroke-width="0.9" stroke-dasharray="2.2 1.2"/><circle cx="806.0" cy="32.7" r="1.35" fill="#1b6a9e"/><line x1="800.7" y1="42.6" x2="804.9" y2="46.8" stroke="#1b6a9e" stroke-width="0.9" stroke-dasharray="2.2 1.2"/><circle cx="806.0" cy="47.9" r="1.35" fill="#1b6a9e"/>
<text x="774.6" y="42.8" style="font-size:9.5px;font-weight:bold;fill:#2a9bc6" textLength="45" lengthAdjust="spacingAndGlyphs">meta<tspan fill="#1f5ca6">S</tspan>ense</text>
<path d="M808.3,44.2 h6.4 v1 h5.5 v6 h-5.5 v5.9 h-6.4 v-5.9 h-6 v-6 h6 z" fill="url(#gPlus)" stroke="#2aa22a" stroke-width="0.5"/>
<g fill="#0b6ea8">
<path d="M1861.5,29.2 C1850,32 1842.5,38 1845,43.5 C1847,48.5 1855,49.8 1861.8,48.3 C1855,47.4 1851.4,45 1851.8,41.2 C1852.4,36.5 1856.5,32.5 1861.5,29.2 z"/>
<path d="M1882.2,26.6 C1892,25.4 1899.6,28.4 1898.7,33.6 C1897.8,39 1889,44 1878.3,46.6 C1886,42.6 1891,38.6 1891.3,34.1 C1891.5,30.4 1888,28 1882.2,26.6 z"/>
<circle cx="1866.7" cy="23.8" r="1.9"/>
<circle cx="1861" cy="28.2" r="1.6"/>
<circle cx="1865.2" cy="30.6" r="1.7"/>
<circle cx="1870" cy="31.6" r="2.3"/>
<circle cx="1874.6" cy="29.6" r="1.7"/>
<circle cx="1871.4" cy="37.6" r="2.3"/>
<circle cx="1867" cy="40.8" r="2.1"/>
<circle cx="1876.4" cy="41.4" r="2.4"/>
<circle cx="1880.6" cy="40.2" r="1.6"/>
<circle cx="1875.2" cy="48.6" r="2.6"/>
<circle cx="1872.6" cy="52" r="1.7"/>
<circle cx="1880.4" cy="51" r="1.7"/>
<circle cx="1866.3" cy="27.4" r="1.5"/>
<circle cx="1869" cy="27.8" r="1.3"/>
</g>
<circle cx="1868.4" cy="41.4" r="1.2" fill="#d8f0ff"/>
<ellipse cx="1871" cy="39" rx="26" ry="11.5" transform="rotate(-16 1871 39)" fill="none" stroke="#9fc6dc" stroke-width="0.7" opacity="0.6"/>
<path d="M1916,29 h5 v2.5 h-5 z" fill="#6a6ad4"/><path d="M1916,32 h6 l-3,3 z" fill="#000080"/>
<path d="M-1,94.5 h4.5 l1.5,2 h8.5 v8 h-14.5 z" fill="#ffc9c9" stroke="#dc0000" stroke-width="1.4"/>
<path d="M-0.3,98.2 h12.6 v5.8 h-12.6 z" fill="#e85050" opacity="0.6"/>
<path d="M9.4,93.8 L15.2,88.6 M11.4,88.4 h4.2 v4.2" fill="none" stroke="#1a2aff" stroke-width="1.3"/>
<rect x="26" y="90.2" width="14.4" height="13.6" fill="#1414ff"/>
<rect x="28.8" y="91.60000000000001" width="8.8" height="4.9" fill="#f0e8c0"/>
<rect x="30" y="92.8" width="6.4" height="0.9" fill="#1414ff"/>
<rect x="28.8" y="99.2" width="8.0" height="4.6" fill="#c8c8e8"/>
<rect x="29.8" y="99.4" width="4.0" height="4.4" fill="#1414ff"/>
<rect x="56.6" y="88.9" width="11.4" height="11" fill="#1414ff"/><rect x="54.6" y="90.4" width="11.4" height="11" fill="#3a3aff" stroke="#0c0cc8" stroke-width="0.5"/>
<rect x="52.2" y="92" width="12.4" height="11.8" fill="#1414ff"/>
<rect x="55.0" y="93.4" width="6.800000000000001" height="4.2" fill="#f0e8c0"/>
<rect x="56.2" y="94.6" width="4.4" height="0.9" fill="#1414ff"/>
<rect x="55.0" y="99.8" width="6.0" height="4.0" fill="#c8c8e8"/>
<rect x="56.0" y="100.0" width="2.0" height="3.8" fill="#1414ff"/>
<rect x="76.8" y="86" width="1.3" height="21" fill="#aebfe8"/>
<g transform="translate(88,91.2) scale(1.0,1.0)"><path d="M0.2,4.6 L4.8,0.6 L5.2,3 C9,2.2 11.6,4 11.4,7.4 C11.2,10.2 9,12.2 6.4,12.6 C8.2,11 8.8,9.2 8.2,7.6 C7.8,6.4 6.8,6 5.8,6.4 L6.2,8.6 z" fill="#b9b9b9"/></g>
<g transform="translate(125.8,91.2) scale(-1.0,1.0)"><path d="M0.2,4.6 L4.8,0.6 L5.2,3 C9,2.2 11.6,4 11.4,7.4 C11.2,10.2 9,12.2 6.4,12.6 C8.2,11 8.8,9.2 8.2,7.6 C7.8,6.4 6.8,6 5.8,6.4 L6.2,8.6 z" fill="#d4203a"/></g>
<path d="M148.6,87.4 v6.6 M166,87.4 v6.6 M149,90.6 h16.6 M149.4,90.6 l3.2,-2.6 v5.2 z M165.2,90.6 l-3.2,-2.6 v5.2 z" stroke="#1414ff" stroke-width="1.2" fill="#1414ff"/>
<line x1="161.1" y1="102.1" x2="165.6" y2="105.8" stroke="#1414ff" stroke-width="2.4" stroke-linecap="round"/>
<line x1="162.7" y1="103.7" x2="165.3" y2="105.5" stroke="#4ab0ff" stroke-width="1" stroke-linecap="round"/>
<circle cx="157.8" cy="98.8" r="4.7" fill="#eef2ff" stroke="#1414ff" stroke-width="1.4"/>
<path d="M155.20000000000002,98.8 h5.2 M157.8,96.2 v5.2" stroke="#1414ff" stroke-width="1.3"/>
<path d="M174.4,89.4 h13.6 M174.4,89.4 v10.2 h3" fill="none" stroke="#1414ff" stroke-width="1.1" stroke-dasharray="1.3 1.1"/>
<line x1="187.5" y1="102.1" x2="192.2" y2="105.8" stroke="#1414ff" stroke-width="2.4" stroke-linecap="round"/>
<line x1="189.1" y1="103.7" x2="191.9" y2="105.5" stroke="#4ab0ff" stroke-width="1" stroke-linecap="round"/>
<circle cx="184.2" cy="98.8" r="4.7" fill="#eef2ff" stroke="#1414ff" stroke-width="1.4"/>
<path d="M181.6,98.8 h5.2 M184.2,96.2 v5.2" stroke="#1414ff" stroke-width="1.3"/>
<path d="M199.8,89 h7 M199.8,106.3 h7 M203.3,89.6 v16 M203.3,89.8 l-2.2,3.4 h4.4 z M203.3,105.6 l-2.2,-3.4 h4.4 z" stroke="#b4b4b4" stroke-width="1.1" fill="#b4b4b4"/>
<path d="M209.6,98.4 L213.6,89.4 L217.6,98.4" fill="none" stroke="#c8c8c8" stroke-width="0.9"/>
<line x1="214.5" y1="102.1" x2="218.8" y2="105.8" stroke="#b4b4b4" stroke-width="2.4" stroke-linecap="round"/>
<circle cx="211.2" cy="98.8" r="4.7" fill="#f2f2f2" stroke="#b4b4b4" stroke-width="1.4"/>
<path d="M208.6,98.8 h5.2 M211.2,96.2 v5.2" stroke="#b4b4b4" stroke-width="1.3"/>
<path d="M231.4,93 l4.2,-4.4 l0.6,2.2 c3.4,-1.4 6.6,0.4 6.6,3.8 l-2.4,0.2 c-0.2,-1.8 -2,-2.6 -3.8,-1.8 l0.6,2 z" fill="#b0b0b0"/>
<line x1="238.5" y1="102.1" x2="242.8" y2="105.8" stroke="#b4b4b4" stroke-width="2.4" stroke-linecap="round"/>
<circle cx="235.2" cy="98.8" r="4.7" fill="#f2f2f2" stroke="#b4b4b4" stroke-width="1.4"/>
<path d="M232.6,98.8 h5.2 M235.2,96.2 v5.2" stroke="#b4b4b4" stroke-width="1.3"/>
<rect x="253.0" y="86" width="1.3" height="21" fill="#aebfe8"/>
<line x1="272.5" y1="99.1" x2="276.4" y2="103.2" stroke="#1414ff" stroke-width="2.4" stroke-linecap="round"/>
<line x1="274.1" y1="100.7" x2="276.1" y2="102.9" stroke="#4ab0ff" stroke-width="1" stroke-linecap="round"/>
<circle cx="268.8" cy="95.4" r="5.2" fill="#eef2ff" stroke="#1414ff" stroke-width="1.4"/>
<path d="M266.2,95.4 h5.2" stroke="#1414ff" stroke-width="1.3"/>
<rect x="287.2" y="86" width="1.3" height="21" fill="#aebfe8"/>
<rect x="292.0" y="84.9" width="24.7" height="24.2" fill="#fbf3dc" stroke="#8ba3c9" stroke-width="1"/>
<rect x="295.8" y="88.6" width="17.2" height="3.2" fill="#fff" stroke="#1414ff" stroke-width="1.1"/><path d="M298,90.2 h13" stroke="#e01010" stroke-width="1.1" stroke-dasharray="3 1.2"/>
<path d="M312.6,92.4 L309,97.6" stroke="#1414ff" stroke-width="1.1"/>
<path d="M294.2,105.4 H301 C303,105.4 302.8,98 303.6,98 C304.4,98 304.2,105.4 306.2,105.4 C308.4,105.4 308.2,97.6 309,97.6 C309.8,97.6 309.6,105.4 311.8,105.4 H314.6" fill="none" stroke="#1414ff" stroke-width="1.1"/>
<path d="M321.1,94.2 h8 l-4.0,4.8 z" fill="#000080"/>
<rect x="336.8" y="84.9" width="23.7" height="24.2" fill="#fbf3dc" stroke="#8ba3c9" stroke-width="1"/>
<rect x="340.8" y="92" width="15.6" height="13.6" fill="#fbf3dc" stroke="#101090" stroke-width="1.2"/>
<path d="M342.6,102.8 H345 C346.6,102.8 346.4,96.6 347.2,96.6 C348,96.6 347.8,102.8 349.4,102.8 C351.2,102.8 351,96.6 351.8,96.6 C352.6,96.6 352.4,102.8 354,102.8 H355" fill="none" stroke="#1414ff" stroke-width="1"/>
<rect x="345.6" y="88.6" width="11.6" height="3.8" fill="#fff" stroke="#d81818" stroke-width="1.1"/><path d="M347.6,90.5 h7.6" stroke="#e01010" stroke-width="1" stroke-dasharray="2.4 1"/>
<rect x="363.1" y="84.9" width="23.8" height="24.2" fill="#fbf3dc" stroke="#8ba3c9" stroke-width="1"/>
<path d="M370.2,94.2 L374.2,96.5 V101.1 L370.2,103.4 L366.2,101.1 V96.5 z" fill="none" stroke="#1414ff" stroke-width="1.2" stroke-dasharray="1.6 0.9"/>
<path d="M370.2,94 V90 M367.6,88.6 h1.2 M371,88.6 h1.2 M374.4,96.4 L377.6,93.6 M374.6,101.4 L378.4,104.6 M379.4,106 h1 M381.4,106 h1" stroke="#1414ff" stroke-width="1.1" stroke-dasharray="1.5 0.8"/>
<rect x="377.6" y="90.4" width="5.8" height="5" fill="#fff" stroke="#d81818" stroke-width="1.1"/><path d="M379.2,94 v-2.2 l1.3,1.3 l1.3,-1.3 v2.2" fill="none" stroke="#d81818" stroke-width="0.7"/>
<rect x="389.3" y="84.9" width="24.0" height="24.2" fill="#fbf3dc" stroke="#8ba3c9" stroke-width="1"/>
<rect x="392.2" y="88.4" width="14.6" height="8.8" fill="#f4f4ec" stroke="#1414ff" stroke-width="1"/><rect x="392.2" y="88.4" width="14.6" height="3" fill="#1a6aff"/>
<path d="M392.2,94.3 h14.6 M397,91.4 v5.8 M402,91.4 v5.8" stroke="#9a9a9a" stroke-width="0.7"/>
<path d="M406.8,96.8 h2.6 v4.6 h-5.6 M406.6,101.4 l-3.4,0 l2.6,-2.4 v4.8 z" fill="#1414ff" stroke="#1414ff" stroke-width="1.1" stroke-linejoin="round"/>
<rect x="396.6" y="99.6" width="3.4" height="2.2" fill="#fff" stroke="#d81818" stroke-width="1"/>
<path d="M392,105.4 h3 l1,-2 l1,2 h2 l1,-2 l1,2 h2.4 l1,-2 l1,2 h3" fill="none" stroke="#111" stroke-width="1"/>
<path d="M417.9,94.2 h8 l-4.0,4.8 z" fill="#000080"/>
<rect x="439" y="89.6" width="13.6" height="14.8" fill="#e4e4e4" stroke="#b8b8b8" stroke-width="1"/><rect x="439" y="89.6" width="13.6" height="2.2" fill="#c4c4c4"/>
<rect x="441.4" y="93.6" width="8.8" height="2.4" fill="#f4f4f4" stroke="#b8b8b8" stroke-width="0.8"/><rect x="441.4" y="97.8" width="4.4" height="4.8" fill="#f8f8f8" stroke="#b8b8b8" stroke-width="0.8"/><rect x="447.4" y="97.8" width="2.8" height="2.6" fill="#f4f4f4" stroke="#c0c0c0" stroke-width="0.7"/>
<path d="M470,102.6 h5.2 M469.8,104.4 h5.6 l-2.8,2.9 z" stroke="#111" stroke-width="0.9" fill="#111"/>
<rect x="1649.2" y="87.4" width="28.6" height="19.4" fill="#f2f5ff" stroke="#1414ff" stroke-width="1.1"/>
<path d="M1657.6,87.4 v19.4 M1657.6,99.6 h20.2 M1667.6,99.6 v7.2 M1649.2,96 h8.4" stroke="#1414ff" stroke-width="1"/>
<path d="M1651,90 h2 M1654.2,90 h1.8 M1651,92.8 h2 M1654.2,92.8 h1.8 M1651,98.6 h1.4 M1654,98.6 h2 M1651,101.4 h1.4 M1654,101.4 h2 M1651,104.2 h1.4 M1654,104.2 h2" stroke="#101090" stroke-width="1.1"/>
<path d="M1659,98 L1661.3,98 L1662.6,90.4 L1663.9,98 L1666.7,98 L1668.0,90.4 L1669.3,98 L1672.1,98 L1673.4,90.4 L1674.7,98 L1677,98" fill="none" stroke="#101090" stroke-width="1"/>
<path d="M1668.6,105.4 L1669.1,105.4 L1670.4,102.0 L1671.7,105.4 L1671.1,105.4 L1672.4,102.0 L1673.7,105.4 L1673.1,105.4 L1674.4,102.0 L1675.7,105.4 L1677,105.4" fill="none" stroke="#101090" stroke-width="1"/>
<path d="M1659,103.4 q1.6,-2.6 3.2,0 t3.2,0" fill="none" stroke="#101090" stroke-width="0.9"/>
<rect x="1684.8" y="86" width="1.3" height="21" fill="#aebfe8"/>
<rect x="1692.2" y="87.6" width="19.6" height="8.8" rx="2" fill="#f2f5ff" stroke="#1414ff" stroke-width="1.2"/>
<path d="M1694,94.6 L1697.1,94.6 L1698.4,89.8 L1699.7,94.6 L1701.7,94.6 L1703.0,89.8 L1704.3,94.6 L1705.9,94.6 L1707.2,89.8 L1708.5,94.6 L1710.4,94.6" fill="none" stroke="#101090" stroke-width="1"/>
<rect x="1692.2" y="97.6" width="19.6" height="8.8" rx="2" fill="#f2f5ff" stroke="#1414ff" stroke-width="1.2"/>
<path d="M1694,104.6 L1697.1,104.6 L1698.4,99.8 L1699.7,104.6 L1701.7,104.6 L1703.0,99.8 L1704.3,104.6 L1705.9,104.6 L1707.2,99.8 L1708.5,104.6 L1710.4,104.6" fill="none" stroke="#101090" stroke-width="1"/>
<rect x="1716.3" y="84.9" width="24.8" height="24.2" fill="#fbf3dc" stroke="#8ba3c9" stroke-width="1"/>
<path d="M1719.2,106.8 V89.6 q0,-1.6 1.6,-1.6 h5 q1.2,0 1.8,1 l0.6,1 h8.8 q1.6,0 1.6,1.6 V106.8 z" fill="#eef1ff" stroke="#1414ff" stroke-width="1.2"/>
<path d="M1727.4,89.4 q0.8,-1.6 2.4,-1.6 h4 q1.4,0 1.8,1.4" fill="none" stroke="#101090" stroke-width="1"/>
<path d="M1721,104.6 h3.2 l1,-9.6 l1,9.6 h2.8 l0.9,-5.4 l0.9,5.4 h1 l0.8,-7.4 l0.8,7.4 h3" fill="#101090" stroke="#101090" stroke-width="1.1" stroke-linejoin="round"/>
<rect x="1746.1" y="86" width="1.3" height="21" fill="#aebfe8"/>
<rect x="1750.6" y="84.9" width="24.6" height="24.2" fill="#fbf3dc" stroke="#8ba3c9" stroke-width="1"/>
<rect x="1754.6" y="97.2" width="13.6" height="8.6" fill="#eceff8" stroke="#1414ff" stroke-width="1.2"/>
<path d="M1758.8,98.4 V92.4 H1763.1999999999998" fill="none" stroke="#1414ff" stroke-width="1.2"/>
<path d="M1758.8,100 l-2.8,-3.2 h5.6 z" fill="#101090"/>
<path d="M1763.1999999999998,92.4 h1.6 l1.1,-3.4 l1.1,3.4 h1.6 l0.8,-1.8 l0.8,1.8 h1.4" fill="none" stroke="#101090" stroke-width="1"/>
<rect x="1780.2" y="97.2" width="13.6" height="8.6" fill="#eceff8" stroke="#1414ff" stroke-width="1.2"/>
<path d="M1784.4,98.4 V92.4 H1788.8" fill="none" stroke="#1414ff" stroke-width="1.2"/>
<path d="M1784.4,100 l-2.8,-3.2 h5.6 z" fill="#101090"/>
<path d="M1788.8,92.4 h1.6 l1.1,-3.4 l1.1,3.4 h1.6 l0.8,-1.8 l0.8,1.8 h1.4" fill="none" stroke="#101090" stroke-width="1"/>
<path d="M1781.8,103.4 h3.4 l1,-2.6 l1,2.6 h1.8 l1,-2.6 l1,2.6 h1.6" fill="none" stroke="#101090" stroke-width="1"/>
<rect x="1806.2" y="97.2" width="13.6" height="8.6" fill="#eceff8" stroke="#1414ff" stroke-width="1.2"/>
<path d="M1810.4,98.4 V92.4 H1814.8" fill="none" stroke="#1414ff" stroke-width="1.2"/>
<path d="M1810.4,100 l-2.8,-3.2 h5.6 z" fill="#101090"/>
<path d="M1814.8,92.4 h1.6 l1.1,-3.4 l1.1,3.4 h1.6 l0.8,-1.8 l0.8,1.8 h1.4" fill="none" stroke="#101090" stroke-width="1"/>
<path d="M1807.8,103.4 h3.4 l1,-2.6 l1,2.6 h1.8 l1,-2.6 l1,2.6 h1.6" fill="none" stroke="#101090" stroke-width="1"/>
<path d="M1813.8,99.4 l5.6,6 M1819.4,99.4 l-5.6,6" stroke="#ff1010" stroke-width="1.3"/>
<rect x="1832.1" y="86" width="1.3" height="21" fill="#aebfe8"/>
<path d="M1842,89.6 v12.4 M1857.4,89.6 v12.4" stroke="#b8b8b8" stroke-width="1" stroke-dasharray="1.2 1"/>
<path d="M1842,92.4 h3 c2,0 2.6,-3.6 3.4,-3.6 M1857.4,92.4 h-3 c-2,0 -2.6,-3.6 -3.4,-3.6 M1842,98.4 h3 c2.2,0 2.4,2.6 4.8,2.6 c2.4,0 2.6,-2.6 4.6,-2.6 h3" fill="none" stroke="#b4b4b4" stroke-width="1"/>
<path d="M1842.4,104.6 h14.6 M1842.2,104.6 l2.4,-1.6 v3.2 z M1857.2,104.6 l-2.4,-1.6 v3.2 z" stroke="#b4b4b4" stroke-width="0.9" fill="#b4b4b4"/>
<path d="M1866.0,94.0 h8 l-4.0,4.8 z" fill="#a8a8a8"/>
<rect x="1878.8" y="86" width="1.3" height="21" fill="#aebfe8"/>
<path d="M1884.7,94.0 h7.6 l-3.8,4.8 z" fill="#000080"/>
<rect x="1896.7" y="84.9" width="26" height="24.6" fill="#f4f6fb" stroke="#8ba3c9" stroke-width="1"/>
<rect x="1902.4" y="90.8" width="13.4" height="12" rx="1" fill="#9cc4ff" stroke="#1a5af0" stroke-width="1.8"/><rect x="1905.2" y="94.4" width="7.8" height="5.6" fill="#2a6af4"/>
<path d="M1459.6,166.6 L1474,158.6 L1481,162.6 L1466.6,171 z" fill="#dfe6ff" stroke="#1414ff" stroke-width="1.3" stroke-linejoin="round"/>
<path d="M1459.6,166.6 V169 L1466.6,173.2 V171 M1466.6,173.2 L1481,165 V162.6" fill="none" stroke="#1414ff" stroke-width="1.3" stroke-linejoin="round"/>
<path d="M1464.4,166.2 l6.4,-3.6 M1467,167.8 l6.4,-3.6 M1469.6,169.2 l6.4,-3.6 M1466.4,164.4 l5.6,3.4 M1469.6,162.6 l5.6,3.4" stroke="#1414ff" stroke-width="0.9"/>
<path d="M1476,155.6 l1.8,-1.6 h8.4 q0.8,0 0.8,0.8 v13 q0,0.8 -0.8,0.8 h-9.4 q-0.8,0 -0.8,-0.8 z" fill="#fff" stroke="#d81818" stroke-width="1.4"/>
<path d="M1478.6,160.2 l5.6,-4 M1480.8,161 l4.4,-3.4 M1480.4,157 l3.6,3.4" stroke="#101090" stroke-width="1.1"/><rect x="1478.2" y="163" width="7.2" height="3.6" fill="#b8b8b8"/>
<rect x="1495.8" y="152.5" width="1.3" height="21.5" fill="#aebfe8"/>
<g transform="translate(1507,158.6) scale(0.98,0.98)"><path d="M0.2,4.6 L4.8,0.6 L5.2,3 C9,2.2 11.6,4 11.4,7.4 C11.2,10.2 9,12.2 6.4,12.6 C8.2,11 8.8,9.2 8.2,7.6 C7.8,6.4 6.8,6 5.8,6.4 L6.2,8.6 z" fill="#bcbcbc"/></g>
<g transform="translate(1545,158) scale(-0.98,0.98)"><path d="M0.2,4.6 L4.8,0.6 L5.2,3 C9,2.2 11.6,4 11.4,7.4 C11.2,10.2 9,12.2 6.4,12.6 C8.2,11 8.8,9.2 8.2,7.6 C7.8,6.4 6.8,6 5.8,6.4 L6.2,8.6 z" fill="#d4203a"/></g>
<rect x="1556.1" y="152.5" width="1.3" height="21.5" fill="#aebfe8"/>
<rect x="1560.5" y="150.7" width="25.6" height="25.4" fill="#fbf3dc" stroke="#8ba3c9" stroke-width="1"/>
<path d="M1564.4,172 h3 V165 M1567.4,172 h3.4 V167.6 M1570.8,172 h4 V166 M1574.8,172 h3 V168.6 M1577.8,172 h3.6" fill="none" stroke="#111" stroke-width="1.2"/>
<path d="M1576.8,153.6 L1580,155.4 V159.2 L1576.8,161 L1573.6,159.2 V155.4 z" fill="none" stroke="#1414ff" stroke-width="1.2"/><path d="M1580,155.4 L1583,153.6" stroke="#1414ff" stroke-width="1.1"/>
<path d="M1575.6,162 L1570,168.6" stroke="#ff2020" stroke-width="1.2"/><path d="M1569,170 l0.6,-3.6 l2.6,2.2 z" fill="#ff2020"/>
<circle cx="1576.6" cy="161.6" r="1.4" fill="#10c010"/><circle cx="1570.4" cy="170.8" r="1.4" fill="#10c010"/>
<rect x="1590.6" y="152.5" width="1.3" height="21.5" fill="#aebfe8"/>
<circle cx="1607.6" cy="163.4" r="5" fill="url(#gBall)"/>
<path d="M1609.4,165.2 l1.2,5.4 l1.4,-1.6 l2.6,2.6 l1.4,-1.4 l-2.6,-2.6 l1.6,-1.4 z" fill="#e01010"/>
<path d="M1625.6,165.8 h10.6" stroke="#111" stroke-width="1.5"/>
<path d="M1636.2,165 L1641.4,155.4 q0.8,-1.6 2,-1 q1.2,0.8 0.4,2.2 L1637.8,165.8 z" fill="#4a6aff" stroke="#1414ff" stroke-width="0.8"/><path d="M1640.8,158 l-2.6,5" stroke="#cfe0ff" stroke-width="0.8"/>
<path d="M1638,176 L1646.6,167.4 V176 z" fill="#f2f5fb" stroke="#c0cce4" stroke-width="0.6"/>
<rect x="1650" y="165" width="8" height="4.4" fill="#fff"/>
<g transform="rotate(38 1663 162.6)"><rect x="1659" y="154.6" width="8" height="6" fill="#8c8c8c"/><rect x="1659" y="154.6" width="3" height="6" fill="#d8d8d8"/><rect x="1659" y="160.6" width="8" height="5" fill="#f4f4f8" stroke="#2a5ae0" stroke-width="0.5"/><path d="M1659,162 h8 M1659,164 h8" stroke="#2a6af0" stroke-width="0.8"/><path d="M1659,165.6 h8 v3 q-4,2.6 -8,0 z" fill="#e02020"/></g>
<path d="M1684.6,155 L1692.2,159.4 V168.2 L1684.6,172.6 L1677,168.2 V159.4 z" fill="none" stroke="#8ad0ff" stroke-width="3.6" stroke-linejoin="round" opacity="0.8"/>
<path d="M1684.6,155 L1692.2,159.4 V168.2 L1684.6,172.6 L1677,168.2 V159.4 z" fill="none" stroke="#1414ff" stroke-width="1.2"/>
<path d="M1683.6,163.8 h10.6 M1683.2,163.8 l3,-2.2 v4.4 z" stroke="#e82020" stroke-width="1.3" fill="#e82020"/><path d="M1693.6,166.2 v-4.6 l1.5,2 l1.5,-2 v4.6" fill="none" stroke="#e82020" stroke-width="0.9"/>
<rect x="1703.5" y="152.5" width="1.3" height="21.5" fill="#aebfe8"/>
<path d="M1714.6,166.8 A7.2,7.2 0 1 0 1722.6,156.4" fill="none" stroke="#e01818" stroke-width="1.5"/>
<path d="M1712.6,164.4 l4.4,1 l-3.4,3.4 z" fill="#e01818"/><path d="M1720.4,155 h6.4 l-1.4,3.4 z" fill="#e01818"/>
<circle cx="1720.6" cy="163.4" r="5.2" fill="url(#gBall)"/>
<rect x="1738.0" y="152.5" width="1.3" height="21.5" fill="#aebfe8"/>
<rect x="1746.8" y="156" width="16.4" height="15.2" fill="#f6f8fc" stroke="#111" stroke-width="1.5"/>
<path d="M1749.2,158.4 l3.4,3.4 M1760.8,158.4 l-3.4,3.4 M1749.2,168.8 l3.4,-3.4 M1760.8,168.8 l-3.4,-3.4" stroke="#ff3030" stroke-width="1"/>
<path d="M1748.6,157.8 h2.6 l-2.6,2.6 z M1761.4,157.8 h-2.6 l2.6,2.6 z M1748.6,169.4 h2.6 l-2.6,-2.6 z M1761.4,169.4 h-2.6 l2.6,-2.6 z" fill="#ff2020"/>
<rect x="1772.1" y="152.5" width="1.3" height="21.5" fill="#aebfe8"/>
<rect x="1776.6" y="150.9" width="24.8" height="25.0" fill="#fbf3dc" stroke="#8ba3c9" stroke-width="1"/>
<path d="M1787.6,158.0 l-1.6,12.0 M1792.2,158.0 l-1.6,12.0 M1783.6,161.8 h11.6 M1783.2,166.4 h11.6" stroke="#1010e0" stroke-width="1.90" fill="none"/>
<path d="M1813.6,160.5 l-1.4,10.2 M1817.5,160.5 l-1.4,10.2 M1810.2,163.7 h9.9 M1809.9,167.6 h9.9" stroke="#1010e0" stroke-width="1.61" fill="none"/>
<path d="M1809.6,161 C1808.4,156.6 1813,154.4 1816.4,156.6 l1,-1.6 l1.2,5 l-5,-0.6 l1.2,-1.4 C1812.8,156.8 1811,158.2 1811.8,160.6 z" fill="#e0203a"/>
<path d="M1831.5,160.8 h8.4 l-4.2,5 z" fill="#000080"/>
<rect x="1847.3" y="152.5" width="1.3" height="21.5" fill="#aebfe8"/>
<path d="M1856,156.4 l2.2,2.2 l-2.2,2.2 M1859.8,156.4 l2.2,2.2 l-2.2,2.2" fill="none" stroke="#111" stroke-width="1.2"/>
<path d="M1857.8,169.4 h5.2 M1857.6,171.2 h5.6 l-2.8,2.9 z" stroke="#111" stroke-width="0.9" fill="#111"/>
<defs><linearGradient id="gBb" x1="0" y1="0" x2="1" y2="1"><stop offset="0" stop-color="#4a90ff"/><stop offset="1" stop-color="#1450c8"/></linearGradient><linearGradient id="gRb" x1="0" y1="0" x2="0" y2="1"><stop offset="0" stop-color="#f06a6a"/><stop offset="1" stop-color="#c41a1a"/></linearGradient></defs>
<rect x="1875.8" y="156.6" width="14" height="13.8" rx="1.6" fill="url(#gBb)"/>
<path d="M1886.4,159.6 L1880,166 M1879.2,161.6 V167 H1884.6" fill="none" stroke="#fff" stroke-width="2"/>
<rect x="1902" y="156.6" width="14" height="13.8" rx="1.6" fill="url(#gRb)"/>
<path d="M1905.4,160 l7.2,7.2 M1912.6,160 l-7.2,7.2" stroke="#fff" stroke-width="2.2"/>
<rect x="1764.4" y="1021.6" width="11.4" height="13" fill="#dfe3ec" stroke="#1414ff" stroke-width="1.3"/>
<circle cx="1768.6000000000001" cy="1028.2" r="2.6" fill="none" stroke="#111" stroke-width="1"/><path d="M1770.8000000000002,1026.6 l2,-2.2 l1.4,1.8" fill="none" stroke="#111" stroke-width="0.9"/>
<path d="M1772.4,1028 v7.6 M1768.6,1031.8 h7.6" stroke="#10b010" stroke-width="2"/>
<rect x="1789.6" y="1020.8" width="11" height="12" fill="#dfe3ec" stroke="#1414ff" stroke-width="1.3"/>
<circle cx="1793.8" cy="1027.3999999999999" r="2.6" fill="none" stroke="#111" stroke-width="1"/><path d="M1796.0,1025.8 l2,-2.2 l1.4,1.8" fill="none" stroke="#111" stroke-width="0.9"/>
<rect x="1783.6" y="1023.4" width="11" height="12" fill="#dfe3ec" stroke="#1414ff" stroke-width="1.3"/>
<circle cx="1787.8" cy="1030.0" r="2.6" fill="none" stroke="#111" stroke-width="1"/><path d="M1790.0,1028.4 l2,-2.2 l1.4,1.8" fill="none" stroke="#111" stroke-width="0.9"/>
<rect x="1807.6" y="1021" width="11.4" height="12.4" fill="#dfe3ec" stroke="#1414ff" stroke-width="1.3"/>
<circle cx="1811.8" cy="1027.6" r="2.6" fill="none" stroke="#111" stroke-width="1"/><path d="M1814.0,1026 l2,-2.2 l1.4,1.8" fill="none" stroke="#111" stroke-width="0.9"/>
<path d="M1812.4,1026.6 l7.6,7.8 M1820,1026.6 l-7.6,7.8" stroke="#f01010" stroke-width="1.5"/>
<rect x="1829" y="1019" width="1.4" height="17" fill="#b7c9ef"/>
<rect x="1837.4" y="1022" width="3" height="11.6" fill="#a9a9a9"/><path d="M1851,1022 v11.6 l-7.4,-5.8 z" fill="#a9a9a9"/>
<path d="M1866.6,1022 v11.6 l-7.6,-5.8 z M1875.4,1022 v11.6 l-7.6,-5.8 z" fill="#a9a9a9"/>
<path d="M1881.2,1022 v11.6 l7.6,-5.8 z M1890,1022 v11.6 l7.6,-5.8 z" fill="#a9a9a9"/>
<path d="M1905,1022 v11.6 l7.6,-5.8 z" fill="#a9a9a9"/><rect x="1914.2" y="1022" width="3.2" height="11.6" fill="#a9a9a9"/>
</svg></body></html>
